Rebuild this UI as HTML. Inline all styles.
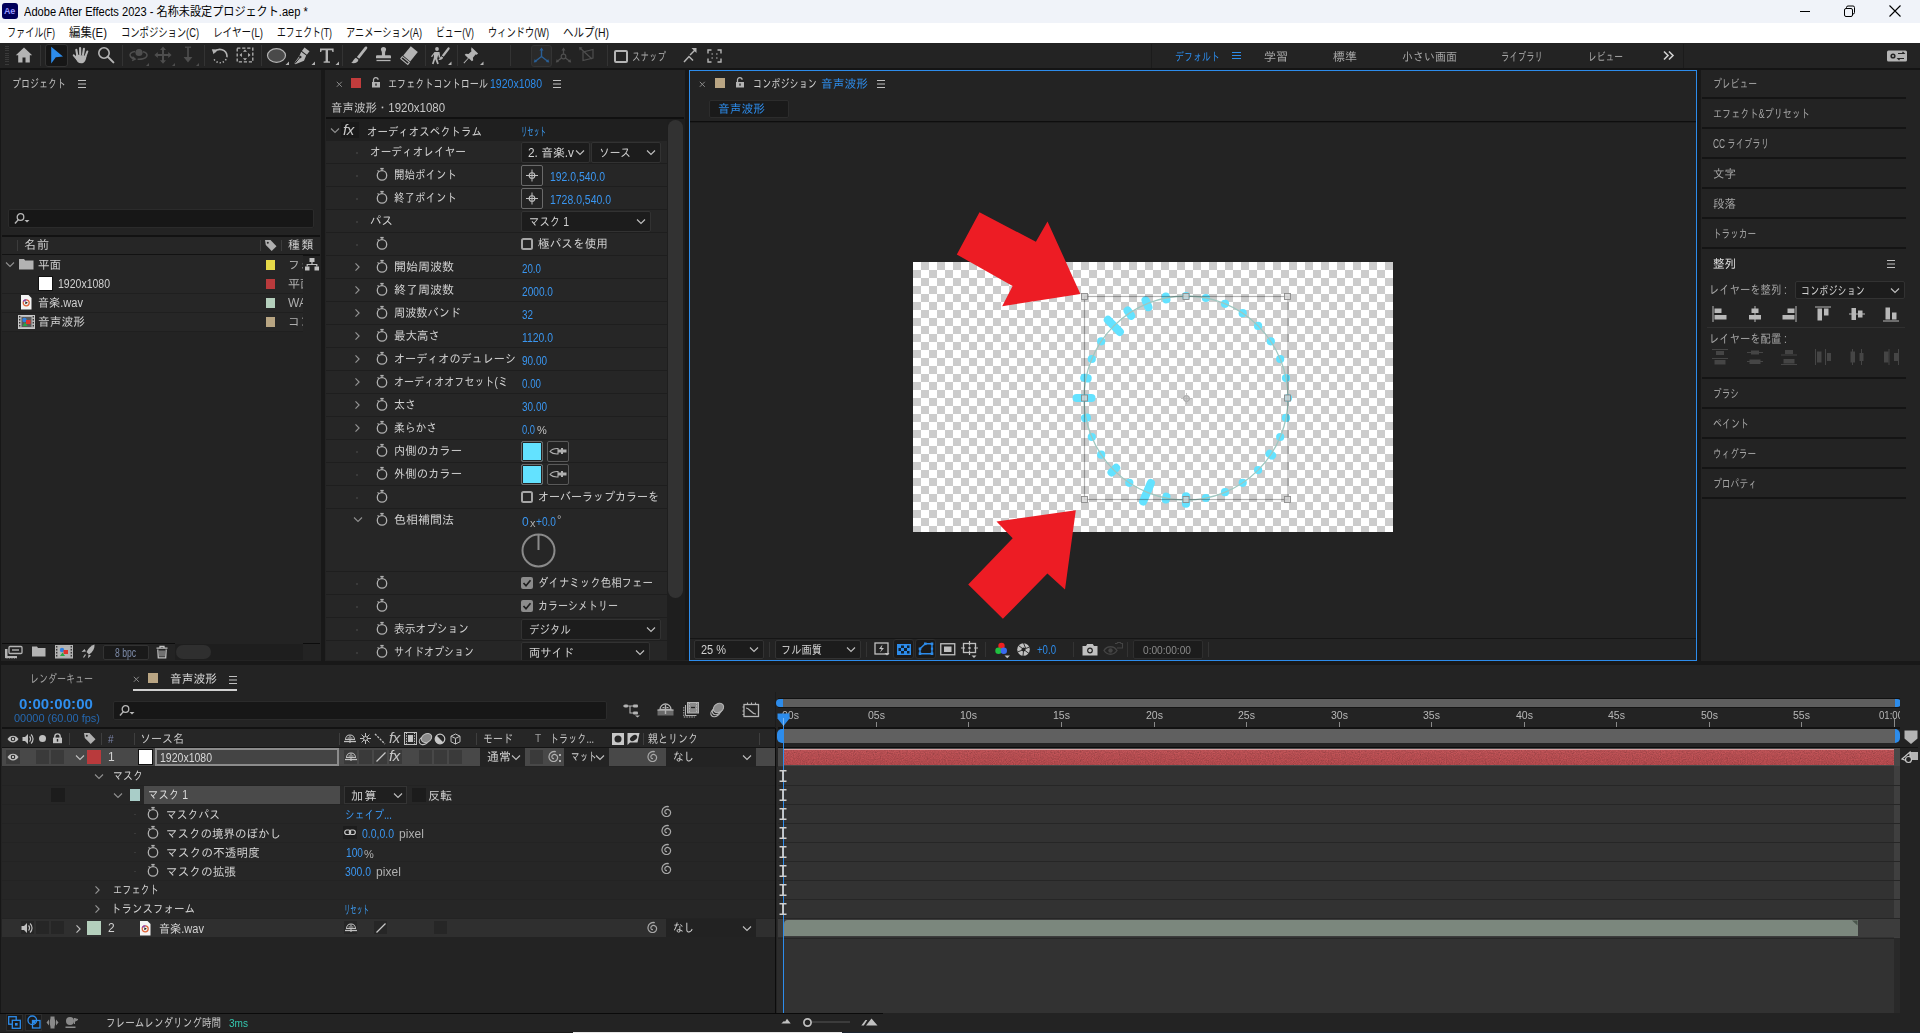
<!DOCTYPE html>
<html lang="ja"><head><meta charset="utf-8"><title>Adobe After Effects 2023</title>
<style>
html,body{margin:0;padding:0;background:#232323;}
body{width:1920px;height:1033px;position:relative;overflow:hidden;font-family:"Liberation Sans","IPAGothic",sans-serif;}
body div,body span,body svg{position:absolute;}
span{white-space:nowrap;}
.j{font-family:"Liberation Sans","IPAGothic",sans-serif;}
.w{font-family:"Liberation Sans","Noto Sans CJK JP",sans-serif;}
.i{font-family:"Liberation Sans",sans-serif;font-style:italic;}
svg{overflow:visible;}
</style></head>
<body>
<div style="left:0px;top:0px;width:1920px;height:23px;background:#f0f3f9;"></div>
<div style="left:2px;top:3px;width:16px;height:16px;background:#00005b;border-radius:3px;"></div>
<span class="w" style="left:4px;top:5.0px;line-height:12px;font-size:9px;color:#9999ff;letter-spacing:-0.3px;font-weight:bold;">Ae</span>
<span class="w" style="left:24px;top:3.5px;line-height:16px;font-size:12px;color:#000;transform:scaleX(0.926);transform-origin:0 50%;">Adobe After Effects 2023 - 名称未設定プロジェクト.aep *</span>
<svg style="left:1797px;top:3px;" width="16" height="16" viewBox="0 0 16 16"><path d="M3 8.5h10" stroke="#000" stroke-width="1" fill="none"/></svg>
<svg style="left:1841px;top:3px;" width="16" height="16" viewBox="0 0 16 16"><rect x="3.5" y="5.5" width="8" height="8" rx="1.5" fill="none" stroke="#000"/><path d="M5.5 5.5v-1a1.5 1.5 0 0 1 1.5-1.5h5a1.5 1.5 0 0 1 1.5 1.5v5a1.5 1.5 0 0 1-1.5 1.5h-0.5" fill="none" stroke="#000"/></svg>
<svg style="left:1887px;top:3px;" width="16" height="16" viewBox="0 0 16 16"><path d="M2.5 2.5l11 11M13.5 2.5l-11 11" stroke="#000" stroke-width="1.1" fill="none"/></svg>
<div style="left:0px;top:23px;width:1920px;height:20px;background:#ffffff;"></div>
<span class="w" style="left:7px;top:24.5px;line-height:16px;font-size:12px;color:#111;transform:scaleX(0.758);transform-origin:0 50%;">ファイル(F)</span>
<span class="w" style="left:69px;top:24.5px;line-height:16px;font-size:12px;color:#111;transform:scaleX(0.950);transform-origin:0 50%;">編集(E)</span>
<span class="w" style="left:121px;top:24.5px;line-height:16px;font-size:12px;color:#111;transform:scaleX(0.775);transform-origin:0 50%;">コンポジション(C)</span>
<span class="w" style="left:213px;top:24.5px;line-height:16px;font-size:12px;color:#111;transform:scaleX(0.802);transform-origin:0 50%;">レイヤー(L)</span>
<span class="w" style="left:277px;top:24.5px;line-height:16px;font-size:12px;color:#111;transform:scaleX(0.730);transform-origin:0 50%;">エフェクト(T)</span>
<span class="w" style="left:346px;top:24.5px;line-height:16px;font-size:12px;color:#111;transform:scaleX(0.764);transform-origin:0 50%;">アニメーション(A)</span>
<span class="w" style="left:436px;top:24.5px;line-height:16px;font-size:12px;color:#111;transform:scaleX(0.731);transform-origin:0 50%;">ビュー(V)</span>
<span class="w" style="left:488px;top:24.5px;line-height:16px;font-size:12px;color:#111;transform:scaleX(0.769);transform-origin:0 50%;">ウィンドウ(W)</span>
<span class="w" style="left:563px;top:24.5px;line-height:16px;font-size:12px;color:#111;transform:scaleX(0.873);transform-origin:0 50%;">ヘルプ(H)</span>
<div id="ui" style="left:0;top:0;width:1920px;height:1033px;will-change:transform;">
<div style="left:0px;top:43px;width:1920px;height:25px;background:#232323;"></div>
<div style="left:0px;top:68px;width:1920px;height:2px;background:#141414;"></div>
<div style="left:5px;top:46.0px;width:4px;height:1px;background:#3a3a3a;"></div>
<div style="left:5px;top:48.2px;width:4px;height:1px;background:#3a3a3a;"></div>
<div style="left:5px;top:50.4px;width:4px;height:1px;background:#3a3a3a;"></div>
<div style="left:5px;top:52.6px;width:4px;height:1px;background:#3a3a3a;"></div>
<div style="left:5px;top:54.8px;width:4px;height:1px;background:#3a3a3a;"></div>
<div style="left:5px;top:57.0px;width:4px;height:1px;background:#3a3a3a;"></div>
<div style="left:5px;top:59.2px;width:4px;height:1px;background:#3a3a3a;"></div>
<div style="left:5px;top:61.400000000000006px;width:4px;height:1px;background:#3a3a3a;"></div>
<div style="left:5px;top:63.6px;width:4px;height:1px;background:#3a3a3a;"></div>
<svg style="left:15px;top:47px;" width="18" height="16" viewBox="0 0 18 16"><path d="M9 0.5L0.8 8.2h2.4v7.3h4.3v-5h3v5h4.3V8.2h2.4z" fill="#b4b4b4"/></svg>
<div style="left:40px;top:45px;width:1px;height:21px;background:#333;"></div>
<div style="left:122px;top:45px;width:1px;height:21px;background:#333;"></div>
<div style="left:204px;top:45px;width:1px;height:21px;background:#333;"></div>
<div style="left:261px;top:45px;width:1px;height:21px;background:#333;"></div>
<div style="left:342px;top:45px;width:1px;height:21px;background:#333;"></div>
<div style="left:425px;top:45px;width:1px;height:21px;background:#333;"></div>
<div style="left:457px;top:45px;width:1px;height:21px;background:#333;"></div>
<div style="left:510px;top:45px;width:1px;height:21px;background:#333;"></div>
<div style="left:607px;top:45px;width:1px;height:21px;background:#333;"></div>
<div style="left:45px;top:44px;width:23px;height:23px;background:#161616;border:1px solid #333;border-radius:3px;box-sizing:border-box;"></div>
<svg style="left:50px;top:46px;" width="14" height="19" viewBox="0 0 14 19"><path d="M1.2 0.8L13 10.6 5.8 11.2 1.2 17.6z" fill="#2d8ceb"/></svg>
<svg style="left:72px;top:46px;" width="18" height="18" viewBox="0 0 18 18"><g stroke="#b4b4b4" stroke-width="2.100" stroke-linecap="round"><path d="M5.300 9.500L4.300 3.800M8.200 8.500L8.100 2M11 9L11.900 2.800M13.400 10.500L15.300 5.500M5 13L1.800 9.400"/></g><path d="M4.200 8.500l10.200 1.500c0 3.500-1.700 7.300-5.200 7.300-3 0-4.600-2-5.600-5z" fill="#b4b4b4"/></svg>
<svg style="left:97px;top:46px;" width="18" height="18" viewBox="0 0 18 18"><circle cx="7" cy="7" r="5.2" fill="none" stroke="#b4b4b4" stroke-width="1.6"/><path d="M10.8 10.8l5.6 5.6" stroke="#b4b4b4" stroke-width="2" stroke-linecap="round"/></svg>
<svg style="left:128px;top:46px;" width="22" height="20" viewBox="0 0 22 20"><circle cx="11" cy="6.5" r="3.6" fill="#4e4e4e"/><path d="M7 5.5C3 6 1 8 2.5 10.5c1 1.6 3.5 2.5 4.5 2.6M4.5 10.8l2.6 2.3-3 1.6M15 5.8c3 .6 5 2.5 3.6 4.8-1.2 2-5.5 3-9 2.6" fill="none" stroke="#4e4e4e" stroke-width="1.5"/><path d="M21 17v3h-3z" fill="#4e4e4e"/></svg>
<svg style="left:154px;top:46px;" width="22" height="20" viewBox="0 0 22 20"><path d="M9 0.5l3 3.4h-2v4.2h4.2v-2l3.4 3-3.4 3v-2H10v4.2h2l-3 3.4-3-3.4h2v-4.2H3.8v2l-3.4-3 3.4-3v2H8V3.900H6z" fill="#4e4e4e"/><path d="M21 17v3h-3z" fill="#4e4e4e"/></svg>
<svg style="left:180px;top:46px;" width="20" height="20" viewBox="0 0 20 20"><path d="M8 1.5v11" stroke="#4e4e4e" stroke-width="1.6"/><path d="M5 1.2h6" stroke="#4e4e4e" stroke-width="1.2"/><path d="M3.600 11h8.800L8 16.500z" fill="#4e4e4e"/><path d="M19 17v3h-3z" fill="#4e4e4e"/></svg>
<svg style="left:210px;top:46px;" width="20" height="20" viewBox="0 0 20 20"><path d="M4.500 6.200A7 7 0 0 1 17 10" fill="none" stroke="#b4b4b4" stroke-width="1.6"/><path d="M1.800 3.200l5.400.4-3.600 4.600z" fill="#b4b4b4"/><path d="M17 10a7 7 0 0 1-13.600 2" fill="none" stroke="#b4b4b4" stroke-width="1.500" stroke-dasharray="1.300 1.900"/></svg>
<svg style="left:236px;top:46px;" width="18" height="18" viewBox="0 0 18 18"><rect x="1.2" y="2.200" width="15.600" height="13.600" fill="none" stroke="#b4b4b4" stroke-width="1.3" stroke-dasharray="3.200 1.800"/><path d="M9 3.500l2 2.200H7zM9 14.500l2-2.200H7zM3.500 9l2.400-2v4zM14.500 9l-2.400-2v4z" fill="#b4b4b4"/></svg>
<svg style="left:266px;top:47px;" width="24" height="18" viewBox="0 0 24 18"><ellipse cx="10.500" cy="8.500" rx="9" ry="6.800" fill="#4a4a4a" stroke="#b4b4b4" stroke-width="1.200"/><path d="M23 14.500v3.500h-3.500z" fill="#b4b4b4"/></svg>
<svg style="left:292px;top:46px;" width="24" height="19" viewBox="0 0 24 19"><path d="M12.500 1.500l5 3.800-2.600 3.400-5-3.800z" fill="#b4b4b4"/><path d="M9.200 5.800l5 3.800-2.200 5.200-8.600 3.400-1.100-.900 5.200-7.500z" fill="#b4b4b4"/><path d="M2.800 17.600l5-6" stroke="#232323" stroke-width="1"/><circle cx="8.300" cy="11" r="1.200" fill="#232323"/><path d="M23 15.500v3.500h-3.500z" fill="#b4b4b4"/></svg>
<svg style="left:318px;top:46px;" width="22" height="19" viewBox="0 0 22 19"><path d="M2 2.500h13.600v3.600h-1.200l-.5-1.900H10v11l2 .4v1.200H5.600v-1.200l2-.4v-11H3.700l-.5 1.900H2z" fill="#b4b4b4"/><path d="M21 15.500v3.500h-3.500z" fill="#b4b4b4"/></svg>
<svg style="left:350px;top:46px;" width="18" height="19" viewBox="0 0 18 19"><path d="M16.800 0.800c.8.600.5 1.500 0 2.300L9.200 12.800 6.900 11 14.600 1.300c.6-.8 1.500-1 2.200-.5z" fill="#b4b4b4"/><path d="M6 11.800l2.400 1.900c-.3 2.400-2.800 4-7.200 3.300 1.700-.7 2.200-3.800 4.800-5.200z" fill="#b4b4b4"/></svg>
<svg style="left:375px;top:46px;" width="17" height="19" viewBox="0 0 17 19"><path d="M8.500 1a2.600 2.600 0 0 1 2.600 2.600c0 1.300-1 1.700-1 3.400v2.200h4.600c.8 0 1.300.5 1.300 1.300v1.700H1v-1.700c0-.8.500-1.300 1.300-1.300H6.900V7c0-1.700-1-2.100-1-3.400A2.600 2.600 0 0 1 8.500 1z" fill="#b4b4b4"/><path d="M1.500 14.500h14" stroke="#b4b4b4" stroke-width="1.300"/></svg>
<svg style="left:400px;top:45px;" width="19" height="21" viewBox="0 0 19 21"><path d="M10.800 1.200l7 5.800-7.600 9.400-7-5.800z" fill="#b4b4b4"/><path d="M2.400 11.600l7 5.800-1.600 2-7-5.800z" fill="none" stroke="#b4b4b4" stroke-width="1.100"/></svg>
<svg style="left:430px;top:46px;" width="22" height="20" viewBox="0 0 22 20"><circle cx="7" cy="3" r="1.900" fill="#b4b4b4"/><path d="M4.500 6h5l.8 5.400-1.400.3-.7-3-1 4 1.600 5-1.600.5-2-5-1.600 5-1.600-.5 1.900-6.200V8.300L2.200 11 .9 10.500z" fill="#b4b4b4"/><path d="M19.200 1.500c.8.500.5 1.300.1 1.900l-5.600 7.400-1.900-1.400 5.700-7.500c.5-.6 1.100-.8 1.700-.4z" fill="#b4b4b4"/><path d="M11.300 10.200l1.800 1.400c-.3 1.800-2 2.700-4.800 2.300 1.200-.6 1.300-2.700 3-3.700z" fill="#b4b4b4"/><path d="M21.500 15.500v3.500H18z" fill="#b4b4b4"/></svg>
<svg style="left:462px;top:46px;" width="22" height="20" viewBox="0 0 22 20"><path d="M9.500 1.300l6.600 6.300-1.400 1.100-1.200-.3-2.600 3.300.3 2.600-1.300 1-3.100-3-4.600 5.100-.7-.6L6 12 2.700 8.800l1.200-1.100 2.600.3 3-2.800-.4-1.300z" fill="#b4b4b4"/><path d="M21.500 15.500v3.500H18z" fill="#b4b4b4"/></svg>
<div style="left:531px;top:45px;width:21px;height:22px;background:#2a2a2a;border:1px solid #343434;border-radius:3px;box-sizing:border-box;"></div>
<svg style="left:533px;top:47px;" width="17" height="18" viewBox="0 0 17 18"><path d="M8.500 9.500V2M8.500 9.500L2 14.500M8.500 9.500L15 14.500" stroke="#2a5f96" stroke-width="1.400" fill="none"/><path d="M8.500 0.500l2 3h-4zM0.800 15.500l1-3.400 2.200 3zM16.200 15.500l-1-3.400-2.200 3z" fill="#2a5f96"/></svg>
<svg style="left:555px;top:47px;" width="17" height="18" viewBox="0 0 17 18"><path d="M8.500 7V2M6.500 11L2 14.500M10.500 11L15 14.500" stroke="#4e4e4e" stroke-width="1.300" fill="none"/><circle cx="8.500" cy="9.500" r="2.300" fill="none" stroke="#4e4e4e" stroke-width="1.200"/><path d="M8.500 0.500l2 3h-4zM0.800 15.500l1-3.400 2.200 3zM16.200 15.500l-1-3.400-2.200 3z" fill="#4e4e4e"/></svg>
<svg style="left:578px;top:46px;" width="18" height="18" viewBox="0 0 18 18"><path d="M5 6l10-2.500v8.500L5 14.500z" fill="none" stroke="#4e4e4e" stroke-width="1.200"/><path d="M2 2l12 11" stroke="#4e4e4e" stroke-width="1.200"/><path d="M1 1l3.500.6-2.800 2.800z" fill="#4e4e4e"/></svg>
<div style="left:614px;top:50px;width:14px;height:13px;border:2px solid #b4b4b4;border-radius:2px;box-sizing:border-box;"></div>
<span class="j" style="left:632px;top:48.5px;line-height:16px;font-size:12px;color:#a8a8a8;transform:scaleX(0.708);transform-origin:0 50%;">スナップ</span>
<svg style="left:682px;top:47px;" width="16" height="17" viewBox="0 0 16 17"><path d="M2 15l5-5.500 4 4" fill="none" stroke="#b4b4b4" stroke-width="1.500"/><path d="M8 8l5-5" stroke="#b4b4b4" stroke-width="1.500"/><path d="M14.500 1v5l-5-5z" fill="#b4b4b4"/></svg>
<svg style="left:707px;top:49px;" width="15" height="14" viewBox="0 0 15 14"><path d="M1 4.500V1h3.500M10.500 1H14v3.500M14 9.500V13h-3.500M4.500 13H1V9.500" fill="none" stroke="#b4b4b4" stroke-width="1.400"/><path d="M5 5.500V5h1M9 5h1v.5M10 8.500V9H9M6 9H5v-.5" fill="none" stroke="#b4b4b4" stroke-width="1.200"/></svg>
<div style="left:1151px;top:44px;width:1px;height:24px;background:#1b1b1b;"></div>
<div style="left:1683px;top:44px;width:1px;height:24px;background:#1b1b1b;"></div>
<span class="j" style="left:1175px;top:48.5px;line-height:16px;font-size:12px;color:#2d8ceb;transform:scaleX(0.750);transform-origin:0 50%;">デフォルト</span>
<svg style="left:1232px;top:51px;" width="10" height="10" viewBox="0 0 10 10"><path d="M0 1.500h9M0 4.500h9M0 7.500h9" stroke="#2d8ceb" stroke-width="1.200"/></svg>
<span class="j" style="left:1264px;top:48.5px;line-height:16px;font-size:12px;color:#a6a6a6;letter-spacing:0.00px;">学習</span>
<span class="j" style="left:1333px;top:48.5px;line-height:16px;font-size:12px;color:#a6a6a6;letter-spacing:0.00px;">標準</span>
<span class="j" style="left:1402px;top:48.5px;line-height:16px;font-size:12px;color:#a6a6a6;transform:scaleX(0.917);transform-origin:0 50%;">小さい画面</span>
<span class="j" style="left:1501px;top:48.5px;line-height:16px;font-size:12px;color:#a6a6a6;transform:scaleX(0.700);transform-origin:0 50%;">ライブラリ</span>
<span class="j" style="left:1588px;top:48.5px;line-height:16px;font-size:12px;color:#a6a6a6;transform:scaleX(0.729);transform-origin:0 50%;">レビュー</span>
<svg style="left:1663px;top:50px;" width="12" height="11" viewBox="0 0 12 11"><path d="M1 1.500l4 4-4 4M6 1.500l4 4-4 4" fill="none" stroke="#d0d0d0" stroke-width="1.600"/></svg>
<svg style="left:1887px;top:50px;" width="21" height="12" viewBox="0 0 21 12"><rect x="0" y="0.500" width="20" height="11" rx="1.500" fill="#b4b4b4"/><circle cx="6" cy="6" r="2.600" fill="#232323"/><circle cx="6" cy="6" r="1" fill="#b4b4b4"/><path d="M11 3.500h6l-1.500-1.500M17 8.500h-6l1.500 1.500" stroke="#232323" stroke-width="1.200" fill="none"/></svg>
<div style="left:0px;top:70px;width:321px;height:591px;background:#232323;"></div>
<span class="j" style="left:12px;top:76.0px;line-height:16px;font-size:12px;color:#c0c0c0;transform:scaleX(0.750);transform-origin:0 50%;">プロジェクト</span>
<svg style="left:78px;top:80px;" width="10" height="9" viewBox="0 0 10 9"><path d="M0 0.500h8M0 4h8M0 7.500h8" stroke="#c0c0c0" stroke-width="1.100"/></svg>
<div style="left:8px;top:209px;width:306px;height:19px;background:#171717;border:1px solid #2b2b2b;border-radius:2px;box-sizing:border-box;"></div>
<svg style="left:14px;top:212px;" width="16" height="13" viewBox="0 0 16 13"><circle cx="6.500" cy="5" r="3.300" fill="none" stroke="#b8b8b8" stroke-width="1.300"/><path d="M4.300 7.600L1 11.500" stroke="#b8b8b8" stroke-width="1.400"/><path d="M10.500 8h5l-2.500 2.600z" fill="#b8b8b8"/></svg>
<div style="left:2px;top:235px;width:318px;height:2px;background:#121212;"></div>
<div style="left:2px;top:237px;width:318px;height:17px;background:#262626;"></div>
<div style="left:2px;top:254px;width:318px;height:2px;background:#121212;"></div>
<div style="left:17px;top:240px;width:1px;height:11px;background:#3c3c3c;"></div>
<div style="left:260px;top:240px;width:1px;height:11px;background:#3c3c3c;"></div>
<div style="left:281px;top:240px;width:1px;height:11px;background:#3c3c3c;"></div>
<span class="j" style="left:24px;top:237.0px;line-height:16px;font-size:12px;color:#d0d0d0;letter-spacing:1.00px;">名前</span>
<svg style="left:264px;top:239px;" width="14" height="13" viewBox="0 0 14 13"><path d="M1 1h5.500l6 6.200-4.800 4.800L1.800 6z" fill="#b0b0b0"/><circle cx="3.800" cy="3.800" r="1" fill="#262626"/></svg>
<span class="j" style="left:288px;top:237.0px;line-height:16px;font-size:12px;color:#d0d0d0;letter-spacing:1.50px;">種類</span>
<div style="left:2px;top:255.0px;width:301px;height:19px;background:#262626;"></div>
<div style="left:2px;top:273.5px;width:301px;height:1px;background:#1f1f1f;"></div>
<div style="left:266px;top:259.5px;width:9px;height:10px;background:#e5d848;"></div>
<div style="left:2px;top:274.0px;width:301px;height:19px;background:#262626;"></div>
<div style="left:2px;top:292.5px;width:301px;height:1px;background:#1f1f1f;"></div>
<div style="left:266px;top:278.5px;width:9px;height:10px;background:#b93a3c;"></div>
<div style="left:2px;top:293.5px;width:301px;height:19px;background:#262626;"></div>
<div style="left:2px;top:312px;width:301px;height:1px;background:#1f1f1f;"></div>
<div style="left:266px;top:298px;width:9px;height:10px;background:#b4cfbc;"></div>
<div style="left:2px;top:312.5px;width:301px;height:19px;background:#262626;"></div>
<div style="left:2px;top:331px;width:301px;height:1px;background:#1f1f1f;"></div>
<div style="left:266px;top:317px;width:9px;height:10px;background:#b8a582;"></div>
<div style="left:288px;top:256px;width:15px;height:76px;overflow:hidden;">
<span class="j" style="left:0px;top:0.5px;line-height:16px;font-size:12px;color:#b0b0b0;">フォ</span>
<span class="j" style="left:0px;top:19.5px;line-height:16px;font-size:12px;color:#b0b0b0;">平面</span>
<span class="j" style="left:0px;top:39.0px;line-height:16px;font-size:12px;color:#b0b0b0;">WA</span>
<span class="j" style="left:0px;top:58.0px;line-height:16px;font-size:12px;color:#b0b0b0;">コン</span>
</div>
<svg style="left:4.5px;top:260.5px;" width="10" height="7" viewBox="0 0 10 7"><path d="M1 1.500l4 4 4-4" fill="none" stroke="#909090" stroke-width="1.100"/></svg>
<svg style="left:19px;top:258px;" width="15" height="12" viewBox="0 0 15 12"><path d="M0 1h5l1.200 1.500H14.500V11.500H0z" fill="#b2b2b2"/></svg>
<span class="j" style="left:38px;top:256.5px;line-height:16px;font-size:12px;color:#d0d0d0;transform:scaleX(0.958);transform-origin:0 50%;">平面</span>
<svg style="left:305px;top:258px;" width="14" height="13" viewBox="0 0 14 13"><path d="M4.500 0h5v4h-5zM0 8.500h4.500v4H0zM9.500 8.500H14v4H9.500z" fill="#c0c0c0"/><path d="M7 4v2.500M2.200 8.500v-2h9.600v2" fill="none" stroke="#c0c0c0" stroke-width="1.200"/></svg>
<div style="left:38px;top:276px;width:15px;height:15px;background:#ffffff;border:1px solid #111;box-sizing:border-box;"></div>
<span class="j" style="left:58px;top:276.0px;line-height:16px;font-size:12px;color:#d0d0d0;transform:scaleX(0.876);transform-origin:0 50%;">1920x1080</span>
<svg style="left:21px;top:295px;" width="11" height="15" viewBox="0 0 11 15"><path d="M0 0h7.500L10.500 3V14.500H0z" fill="#f4f4f4"/><circle cx="5.200" cy="7.800" r="3" fill="none" stroke="#e0663c" stroke-width="1.300"/><path d="M2.400 6.500a3 3 0 0 1 3-1.700" fill="none" stroke="#7a3fc8" stroke-width="1.300"/><path d="M4.300 6.300l2.600 1.500-2.600 1.500z" fill="#222"/></svg>
<span class="j" style="left:38px;top:295.0px;line-height:16px;font-size:12px;color:#d0d0d0;transform:scaleX(0.924);transform-origin:0 50%;">音楽.wav</span>
<svg style="left:18px;top:315px;" width="17" height="14" viewBox="0 0 17 14"><rect x="0.500" y="0.500" width="16" height="13" fill="#b4b4b4" stroke="#c8c8c8"/><path d="M1.700 1v12M15.300 1v12" stroke="#2a2a2a" stroke-width="1.200" stroke-dasharray="1.500 1.500"/><rect x="3.500" y="2" width="10" height="10" fill="#5a5a5a"/><circle cx="6.500" cy="5" r="2.200" fill="#2f7fe0"/><rect x="8" y="5" width="4.500" height="4" fill="#e0342c"/><path d="M4.500 11l2.500-3.500 2.500 3.500z" fill="#28a844"/></svg>
<span class="j" style="left:38px;top:314.0px;line-height:16px;font-size:12px;color:#d0d0d0;transform:scaleX(0.979);transform-origin:0 50%;">音声波形</span>
<div style="left:2px;top:643px;width:173px;height:1px;background:#0c0c0c;"></div>
<div style="left:303px;top:643px;width:17px;height:1px;background:#0c0c0c;"></div>
<div style="left:175px;top:644px;width:128px;height:16px;background:#1e1e1e;"></div>
<svg style="left:4px;top:646px;" width="19" height="13" viewBox="0 0 19 13"><rect x="5" y="0.500" width="13" height="7" rx="1" fill="none" stroke="#b4b4b4" stroke-width="1.300"/><path d="M8 4h7" stroke="#b4b4b4" stroke-width="1.400"/><path d="M1 3v9.500h12v-2.500H3.500V3z" fill="#b4b4b4"/><path d="M1 12.500h12" stroke="#232323" stroke-width="0.800" stroke-dasharray="1.500 1"/></svg>
<svg style="left:32px;top:646px;" width="14" height="11" viewBox="0 0 14 11"><path d="M0 0.500h5l1 1.500H13.500V10.500H0z" fill="#b4b4b4"/></svg>
<svg style="left:55px;top:645px;" width="18" height="14" viewBox="0 0 18 14"><rect x="0.500" y="0.500" width="17" height="12.500" fill="#a8a8a8" stroke="#b4b4b4"/><rect x="3" y="1.500" width="12" height="10.500" fill="#b4b4b4"/><path d="M1.700 1v12M16.300 1v12" stroke="#2a2a2a" stroke-width="1.200" stroke-dasharray="1.500 1.500"/><circle cx="7" cy="5" r="2.200" fill="#2f7fe0"/><rect x="8.500" y="5" width="4.500" height="4" fill="#e0342c"/><path d="M5 11l2.500-3.500L10 11z" fill="#28a844"/></svg>
<svg style="left:80px;top:644px;" width="16" height="15" viewBox="0 0 16 15"><path d="M14.500 0.500c.3 4-1.500 7.500-5.500 10L6.500 8c2-4 4.500-6.500 8-7.500z" fill="#b4b4b4"/><path d="M6 7.500L1.500 8l3-3zM8.500 10.500l-.5 3.800 3-2.800z" fill="#b4b4b4"/><path d="M5.500 10.500l-2 3" stroke="#b4b4b4" stroke-width="1.200"/></svg>
<div style="left:103px;top:645px;width:46px;height:15px;background:#1a1a1a;border:1px solid #333;border-radius:2px;box-sizing:border-box;"></div>
<span class="j" style="left:115px;top:645.5px;line-height:14px;font-size:12px;color:#7d8ba8;transform:scaleX(0.715);transform-origin:0 50%;">8 bpc</span>
<svg style="left:156px;top:645px;" width="12" height="14" viewBox="0 0 12 14"><path d="M0.500 3.200h11M4 3V1.300h4V3" fill="none" stroke="#c0c0c0" stroke-width="1.300"/><path d="M1.800 4.500l.500 8.300h7.400l.500-8.300" fill="none" stroke="#c0c0c0" stroke-width="1.300"/><path d="M4 5.500v6M6 5.500v6M8 5.500v6" stroke="#c0c0c0" stroke-width="1"/></svg>
<div style="left:176px;top:645px;width:35px;height:14px;background:#2f2f2f;border-radius:7px;"></div>
<div style="left:321px;top:70px;width:4px;height:591px;background:#181818;"></div>
<div style="left:325px;top:70px;width:364px;height:591px;background:#232323;"></div>
<svg style="left:336px;top:81px;" width="7" height="7" viewBox="0 0 7 7"><path d="M0.800 0.800l5 5M5.800 0.800l-5 5" stroke="#8a8a8a" stroke-width="1"/></svg>
<div style="left:351px;top:78px;width:10px;height:10px;background:#c23c3c;"></div>
<svg style="left:371px;top:77px;" width="10" height="11" viewBox="0 0 10 11"><path d="M2.500 5V3a2.300 2.300 0 0 1 4.600-.2" fill="none" stroke="#b4b4b4" stroke-width="1.300"/><rect x="1" y="5" width="8" height="5.500" fill="#b4b4b4"/><rect x="4.300" y="6.500" width="1.400" height="2.200" fill="#232323"/></svg>
<span class="j" style="left:388px;top:76.0px;line-height:16px;font-size:12px;color:#d0d0d0;transform:scaleX(0.758);transform-origin:0 50%;">エフェクトコントロール</span>
<span class="j" style="left:490px;top:76.0px;line-height:16px;font-size:12px;color:#2d8ceb;transform:scaleX(0.876);transform-origin:0 50%;">1920x1080</span>
<svg style="left:553px;top:80px;" width="10" height="9" viewBox="0 0 10 9"><path d="M0 0.500h8M0 4h8M0 7.500h8" stroke="#c0c0c0" stroke-width="1.100"/></svg>
<span class="j" style="left:331px;top:100.0px;line-height:16px;font-size:12px;color:#c8c8c8;transform:scaleX(0.955);transform-origin:0 50%;">音声波形・1920x1080</span>
<div style="left:326px;top:117px;width:358px;height:2px;background:#101010;"></div>
<div style="left:667px;top:119px;width:18px;height:541px;background:#1e1e1e;"></div>
<div style="left:668px;top:120px;width:15px;height:478px;background:#323232;border-radius:7.5px;"></div>
<div style="left:685px;top:70px;width:4px;height:591px;background:#181818;"></div>
<div style="left:326px;top:119px;width:341px;height:22px;background:#1f1f1f;"></div>
<div style="left:326px;top:141px;width:341px;height:23px;background:#262626;"></div>
<div style="left:326px;top:163px;width:341px;height:1px;background:#1e1e1e;"></div>
<div style="left:326px;top:164px;width:341px;height:23px;background:#262626;"></div>
<div style="left:326px;top:186px;width:341px;height:1px;background:#1e1e1e;"></div>
<div style="left:326px;top:187px;width:341px;height:23px;background:#262626;"></div>
<div style="left:326px;top:209px;width:341px;height:1px;background:#1e1e1e;"></div>
<div style="left:326px;top:210px;width:341px;height:23px;background:#262626;"></div>
<div style="left:326px;top:232px;width:341px;height:1px;background:#1e1e1e;"></div>
<div style="left:326px;top:233px;width:341px;height:23px;background:#262626;"></div>
<div style="left:326px;top:255px;width:341px;height:1px;background:#1e1e1e;"></div>
<div style="left:326px;top:256px;width:341px;height:23px;background:#262626;"></div>
<div style="left:326px;top:278px;width:341px;height:1px;background:#1e1e1e;"></div>
<div style="left:326px;top:279px;width:341px;height:23px;background:#262626;"></div>
<div style="left:326px;top:301px;width:341px;height:1px;background:#1e1e1e;"></div>
<div style="left:326px;top:302px;width:341px;height:23px;background:#262626;"></div>
<div style="left:326px;top:324px;width:341px;height:1px;background:#1e1e1e;"></div>
<div style="left:326px;top:325px;width:341px;height:23px;background:#262626;"></div>
<div style="left:326px;top:347px;width:341px;height:1px;background:#1e1e1e;"></div>
<div style="left:326px;top:348px;width:341px;height:23px;background:#262626;"></div>
<div style="left:326px;top:370px;width:341px;height:1px;background:#1e1e1e;"></div>
<div style="left:326px;top:371px;width:341px;height:23px;background:#262626;"></div>
<div style="left:326px;top:393px;width:341px;height:1px;background:#1e1e1e;"></div>
<div style="left:326px;top:394px;width:341px;height:23px;background:#262626;"></div>
<div style="left:326px;top:416px;width:341px;height:1px;background:#1e1e1e;"></div>
<div style="left:326px;top:417px;width:341px;height:23px;background:#262626;"></div>
<div style="left:326px;top:439px;width:341px;height:1px;background:#1e1e1e;"></div>
<div style="left:326px;top:440px;width:341px;height:23px;background:#262626;"></div>
<div style="left:326px;top:462px;width:341px;height:1px;background:#1e1e1e;"></div>
<div style="left:326px;top:463px;width:341px;height:23px;background:#262626;"></div>
<div style="left:326px;top:485px;width:341px;height:1px;background:#1e1e1e;"></div>
<div style="left:326px;top:486px;width:341px;height:23px;background:#262626;"></div>
<div style="left:326px;top:508px;width:341px;height:1px;background:#1e1e1e;"></div>
<div style="left:326px;top:509px;width:341px;height:23px;background:#262626;"></div>
<div style="left:326px;top:532px;width:341px;height:40px;background:#262626;"></div>
<div style="left:326px;top:571px;width:341px;height:1px;background:#1e1e1e;"></div>
<div style="left:326px;top:572px;width:341px;height:23px;background:#262626;"></div>
<div style="left:326px;top:594px;width:341px;height:1px;background:#1e1e1e;"></div>
<div style="left:326px;top:595px;width:341px;height:23px;background:#262626;"></div>
<div style="left:326px;top:617px;width:341px;height:1px;background:#1e1e1e;"></div>
<div style="left:326px;top:618px;width:341px;height:23px;background:#262626;"></div>
<div style="left:326px;top:640px;width:341px;height:1px;background:#1e1e1e;"></div>
<div style="left:326px;top:641px;width:341px;height:23px;background:#262626;"></div>
<div style="left:326px;top:663px;width:341px;height:1px;background:#1e1e1e;"></div>
<div style="left:326px;top:660px;width:342px;height:1px;background:#232323;"></div>
<svg style="left:330px;top:126.5px;" width="10" height="7" viewBox="0 0 10 7"><path d="M1 1.500l4 4 4-4" fill="none" stroke="#909090" stroke-width="1.100"/></svg>
<div style="left:341px;top:122px;width:18px;height:16px;background:#191919;"></div>
<span class="i" style="left:343px;top:121.5px;line-height:16px;font-size:15px;color:#c8c8c8;letter-spacing:-0.3px;">fx</span>
<span class="j" style="left:367px;top:124.0px;line-height:16px;font-size:12px;color:#d2d2d2;transform:scaleX(0.871);transform-origin:0 50%;">オーディオスペクトラム</span>
<span class="j" style="left:521px;top:124.0px;line-height:16px;font-size:12px;color:#3d9ff8;transform:scaleX(0.521);transform-origin:0 50%;">リセット</span>
<div style="left:356px;top:151.5px;width:2px;height:2px;background:#3a3a3a;"></div>
<span class="j" style="left:370px;top:144.0px;line-height:16px;font-size:12px;color:#d2d2d2;transform:scaleX(0.889);transform-origin:0 50%;">オーディオレイヤー</span>
<div style="left:521px;top:142px;width:69px;height:21px;background:#1c1c1c;border:1px solid #323232;border-radius:2px;box-sizing:border-box;"></div>
<span class="j" style="left:528px;top:145.0px;line-height:16px;font-size:12px;color:#d2d2d2;transform:scaleX(0.985);transform-origin:0 50%;">2. 音楽.v</span>
<svg style="left:575px;top:149.0px;" width="10" height="7" viewBox="0 0 10 7"><path d="M1 1.500l4 4 4-4" fill="none" stroke="#c0c0c0" stroke-width="1.100"/></svg>
<div style="left:591px;top:142px;width:70px;height:21px;background:#1c1c1c;border:1px solid #323232;border-radius:2px;box-sizing:border-box;"></div>
<span class="j" style="left:599px;top:145.0px;line-height:16px;font-size:12px;color:#d2d2d2;transform:scaleX(0.889);transform-origin:0 50%;">ソース</span>
<svg style="left:646px;top:149.0px;" width="10" height="7" viewBox="0 0 10 7"><path d="M1 1.500l4 4 4-4" fill="none" stroke="#c0c0c0" stroke-width="1.100"/></svg>
<div style="left:356px;top:174.5px;width:2px;height:2px;background:#3a3a3a;"></div>
<svg style="left:374.5px;top:165.5px;" width="14" height="16" viewBox="0 0 14 16"><circle cx="7" cy="9.400" r="4.700" fill="none" stroke="#b0b0b0" stroke-width="1.300"/><path d="M5.300 2.600h3.400" stroke="#b0b0b0" stroke-width="1.400"/><path d="M7 2.600v2M2.600 4.300l1.300 1.300" stroke="#b0b0b0" stroke-width="1.200"/></svg>
<span class="j" style="left:394px;top:167.0px;line-height:16px;font-size:12px;color:#d2d2d2;transform:scaleX(0.875);transform-origin:0 50%;">開始ポイント</span>
<div style="left:521px;top:165px;width:22px;height:21px;background:#232323;border:1px solid #6a6a6a;border-radius:2px;box-sizing:border-box;"></div>
<svg style="left:525px;top:169px;" width="14" height="13" viewBox="0 0 14 13"><circle cx="7" cy="6.500" r="2.800" fill="none" stroke="#c0c0c0" stroke-width="1.100"/><path d="M7 0.500v12M1 6.500h12" stroke="#c0c0c0" stroke-width="1"/></svg>
<span class="j" style="left:550px;top:168.5px;line-height:16px;font-size:12px;color:#3a96f0;transform:scaleX(0.867);transform-origin:0 50%;">192.0,540.0</span>
<div style="left:356px;top:197.5px;width:2px;height:2px;background:#3a3a3a;"></div>
<svg style="left:374.5px;top:188.5px;" width="14" height="16" viewBox="0 0 14 16"><circle cx="7" cy="9.400" r="4.700" fill="none" stroke="#b0b0b0" stroke-width="1.300"/><path d="M5.300 2.600h3.400" stroke="#b0b0b0" stroke-width="1.400"/><path d="M7 2.600v2M2.600 4.300l1.300 1.300" stroke="#b0b0b0" stroke-width="1.200"/></svg>
<span class="j" style="left:394px;top:190.0px;line-height:16px;font-size:12px;color:#d2d2d2;transform:scaleX(0.875);transform-origin:0 50%;">終了ポイント</span>
<div style="left:521px;top:188px;width:22px;height:21px;background:#232323;border:1px solid #6a6a6a;border-radius:2px;box-sizing:border-box;"></div>
<svg style="left:525px;top:192px;" width="14" height="13" viewBox="0 0 14 13"><circle cx="7" cy="6.500" r="2.800" fill="none" stroke="#c0c0c0" stroke-width="1.100"/><path d="M7 0.500v12M1 6.500h12" stroke="#c0c0c0" stroke-width="1"/></svg>
<span class="j" style="left:550px;top:191.5px;line-height:16px;font-size:12px;color:#3a96f0;transform:scaleX(0.870);transform-origin:0 50%;">1728.0,540.0</span>
<div style="left:356px;top:220.5px;width:2px;height:2px;background:#3a3a3a;"></div>
<span class="j" style="left:370px;top:213.0px;line-height:16px;font-size:12px;color:#d2d2d2;transform:scaleX(0.958);transform-origin:0 50%;">パス</span>
<div style="left:521px;top:211px;width:130px;height:21px;background:#1c1c1c;border:1px solid #323232;border-radius:2px;box-sizing:border-box;"></div>
<span class="j" style="left:529px;top:214.0px;line-height:16px;font-size:12px;color:#d2d2d2;transform:scaleX(0.869);transform-origin:0 50%;">マスク 1</span>
<svg style="left:636px;top:218.0px;" width="10" height="7" viewBox="0 0 10 7"><path d="M1 1.500l4 4 4-4" fill="none" stroke="#c0c0c0" stroke-width="1.100"/></svg>
<div style="left:356px;top:243.5px;width:2px;height:2px;background:#3a3a3a;"></div>
<svg style="left:374.5px;top:234.5px;" width="14" height="16" viewBox="0 0 14 16"><circle cx="7" cy="9.400" r="4.700" fill="none" stroke="#b0b0b0" stroke-width="1.300"/><path d="M5.300 2.600h3.400" stroke="#b0b0b0" stroke-width="1.400"/><path d="M7 2.600v2M2.600 4.300l1.300 1.300" stroke="#b0b0b0" stroke-width="1.200"/></svg>
<div style="left:521px;top:238.0px;width:12px;height:12px;border:2px solid #a6a6a6;border-radius:2.500px;box-sizing:border-box;"></div>
<span class="j" style="left:538px;top:236.0px;line-height:16px;font-size:12px;color:#d2d2d2;transform:scaleX(0.972);transform-origin:0 50%;">極パスを使用</span>
<svg style="left:353.5px;top:261.5px;" width="7" height="10" viewBox="0 0 7 10"><path d="M1.500 1.400l3.600 3.600-3.600 3.600" fill="none" stroke="#969696" stroke-width="1.100"/></svg>
<svg style="left:374.5px;top:257.5px;" width="14" height="16" viewBox="0 0 14 16"><circle cx="7" cy="9.400" r="4.700" fill="none" stroke="#b0b0b0" stroke-width="1.300"/><path d="M5.300 2.600h3.400" stroke="#b0b0b0" stroke-width="1.400"/><path d="M7 2.600v2M2.600 4.300l1.300 1.300" stroke="#b0b0b0" stroke-width="1.200"/></svg>
<span class="j" style="left:394px;top:259.0px;line-height:16px;font-size:12px;color:#d2d2d2;letter-spacing:0.00px;">開始周波数</span>
<span class="j" style="left:522px;top:260.5px;line-height:16px;font-size:12px;color:#3a96f0;transform:scaleX(0.813);transform-origin:0 50%;">20.0</span>
<svg style="left:353.5px;top:284.5px;" width="7" height="10" viewBox="0 0 7 10"><path d="M1.500 1.400l3.600 3.600-3.600 3.600" fill="none" stroke="#969696" stroke-width="1.100"/></svg>
<svg style="left:374.5px;top:280.5px;" width="14" height="16" viewBox="0 0 14 16"><circle cx="7" cy="9.400" r="4.700" fill="none" stroke="#b0b0b0" stroke-width="1.300"/><path d="M5.300 2.600h3.400" stroke="#b0b0b0" stroke-width="1.400"/><path d="M7 2.600v2M2.600 4.300l1.300 1.300" stroke="#b0b0b0" stroke-width="1.200"/></svg>
<span class="j" style="left:394px;top:282.0px;line-height:16px;font-size:12px;color:#d2d2d2;letter-spacing:0.00px;">終了周波数</span>
<span class="j" style="left:522px;top:283.5px;line-height:16px;font-size:12px;color:#3a96f0;transform:scaleX(0.845);transform-origin:0 50%;">2000.0</span>
<svg style="left:353.5px;top:307.5px;" width="7" height="10" viewBox="0 0 7 10"><path d="M1.500 1.400l3.600 3.600-3.600 3.600" fill="none" stroke="#969696" stroke-width="1.100"/></svg>
<svg style="left:374.5px;top:303.5px;" width="14" height="16" viewBox="0 0 14 16"><circle cx="7" cy="9.400" r="4.700" fill="none" stroke="#b0b0b0" stroke-width="1.300"/><path d="M5.300 2.600h3.400" stroke="#b0b0b0" stroke-width="1.400"/><path d="M7 2.600v2M2.600 4.300l1.300 1.300" stroke="#b0b0b0" stroke-width="1.200"/></svg>
<span class="j" style="left:394px;top:305.0px;line-height:16px;font-size:12px;color:#d2d2d2;transform:scaleX(0.931);transform-origin:0 50%;">周波数バンド</span>
<span class="j" style="left:522px;top:306.5px;line-height:16px;font-size:12px;color:#3a96f0;transform:scaleX(0.823);transform-origin:0 50%;">32</span>
<svg style="left:353.5px;top:330.5px;" width="7" height="10" viewBox="0 0 7 10"><path d="M1.500 1.400l3.600 3.600-3.600 3.600" fill="none" stroke="#969696" stroke-width="1.100"/></svg>
<svg style="left:374.5px;top:326.5px;" width="14" height="16" viewBox="0 0 14 16"><circle cx="7" cy="9.400" r="4.700" fill="none" stroke="#b0b0b0" stroke-width="1.300"/><path d="M5.300 2.600h3.400" stroke="#b0b0b0" stroke-width="1.400"/><path d="M7 2.600v2M2.600 4.300l1.300 1.300" stroke="#b0b0b0" stroke-width="1.200"/></svg>
<span class="j" style="left:394px;top:328.0px;line-height:16px;font-size:12px;color:#d2d2d2;transform:scaleX(0.958);transform-origin:0 50%;">最大高さ</span>
<span class="j" style="left:522px;top:329.5px;line-height:16px;font-size:12px;color:#3a96f0;transform:scaleX(0.866);transform-origin:0 50%;">1120.0</span>
<svg style="left:353.5px;top:353.5px;" width="7" height="10" viewBox="0 0 7 10"><path d="M1.500 1.400l3.600 3.600-3.600 3.600" fill="none" stroke="#969696" stroke-width="1.100"/></svg>
<svg style="left:374.5px;top:349.5px;" width="14" height="16" viewBox="0 0 14 16"><circle cx="7" cy="9.400" r="4.700" fill="none" stroke="#b0b0b0" stroke-width="1.300"/><path d="M5.300 2.600h3.400" stroke="#b0b0b0" stroke-width="1.400"/><path d="M7 2.600v2M2.600 4.300l1.300 1.300" stroke="#b0b0b0" stroke-width="1.200"/></svg>
<span class="j" style="left:394px;top:351.0px;line-height:16px;font-size:12px;color:#d2d2d2;transform:scaleX(0.924);transform-origin:0 50%;">オーディオのデュレーシ</span>
<span class="j" style="left:522px;top:352.5px;line-height:16px;font-size:12px;color:#3a96f0;transform:scaleX(0.832);transform-origin:0 50%;">90.00</span>
<svg style="left:353.5px;top:376.5px;" width="7" height="10" viewBox="0 0 7 10"><path d="M1.500 1.400l3.600 3.600-3.600 3.600" fill="none" stroke="#969696" stroke-width="1.100"/></svg>
<svg style="left:374.5px;top:372.5px;" width="14" height="16" viewBox="0 0 14 16"><circle cx="7" cy="9.400" r="4.700" fill="none" stroke="#b0b0b0" stroke-width="1.300"/><path d="M5.300 2.600h3.400" stroke="#b0b0b0" stroke-width="1.400"/><path d="M7 2.600v2M2.600 4.300l1.300 1.300" stroke="#b0b0b0" stroke-width="1.200"/></svg>
<span class="j" style="left:394px;top:374.0px;line-height:16px;font-size:12px;color:#d2d2d2;transform:scaleX(0.838);transform-origin:0 50%;">オーディオオフセット(ミ</span>
<span class="j" style="left:522px;top:375.5px;line-height:16px;font-size:12px;color:#3a96f0;transform:scaleX(0.813);transform-origin:0 50%;">0.00</span>
<svg style="left:353.5px;top:399.5px;" width="7" height="10" viewBox="0 0 7 10"><path d="M1.500 1.400l3.600 3.600-3.600 3.600" fill="none" stroke="#969696" stroke-width="1.100"/></svg>
<svg style="left:374.5px;top:395.5px;" width="14" height="16" viewBox="0 0 14 16"><circle cx="7" cy="9.400" r="4.700" fill="none" stroke="#b0b0b0" stroke-width="1.300"/><path d="M5.300 2.600h3.400" stroke="#b0b0b0" stroke-width="1.400"/><path d="M7 2.600v2M2.600 4.300l1.300 1.300" stroke="#b0b0b0" stroke-width="1.200"/></svg>
<span class="j" style="left:394px;top:397.0px;line-height:16px;font-size:12px;color:#d2d2d2;transform:scaleX(0.917);transform-origin:0 50%;">太さ</span>
<span class="j" style="left:522px;top:398.5px;line-height:16px;font-size:12px;color:#3a96f0;transform:scaleX(0.832);transform-origin:0 50%;">30.00</span>
<svg style="left:353.5px;top:422.5px;" width="7" height="10" viewBox="0 0 7 10"><path d="M1.500 1.400l3.600 3.600-3.600 3.600" fill="none" stroke="#969696" stroke-width="1.100"/></svg>
<svg style="left:374.5px;top:418.5px;" width="14" height="16" viewBox="0 0 14 16"><circle cx="7" cy="9.400" r="4.700" fill="none" stroke="#b0b0b0" stroke-width="1.300"/><path d="M5.300 2.600h3.400" stroke="#b0b0b0" stroke-width="1.400"/><path d="M7 2.600v2M2.600 4.300l1.300 1.300" stroke="#b0b0b0" stroke-width="1.200"/></svg>
<span class="j" style="left:394px;top:420.0px;line-height:16px;font-size:12px;color:#d2d2d2;transform:scaleX(0.896);transform-origin:0 50%;">柔らかさ</span>
<span class="j" style="left:522px;top:421.5px;line-height:16px;font-size:12px;color:#3a96f0;transform:scaleX(0.779);transform-origin:0 50%;">0.0</span>
<span class="j" style="left:537px;top:423.0px;line-height:14px;font-size:11px;color:#c0c0c0;">%</span>
<div style="left:356px;top:450.5px;width:2px;height:2px;background:#3a3a3a;"></div>
<svg style="left:374.5px;top:441.5px;" width="14" height="16" viewBox="0 0 14 16"><circle cx="7" cy="9.400" r="4.700" fill="none" stroke="#b0b0b0" stroke-width="1.300"/><path d="M5.300 2.600h3.400" stroke="#b0b0b0" stroke-width="1.400"/><path d="M7 2.600v2M2.600 4.300l1.300 1.300" stroke="#b0b0b0" stroke-width="1.200"/></svg>
<span class="j" style="left:394px;top:443.0px;line-height:16px;font-size:12px;color:#d2d2d2;transform:scaleX(0.944);transform-origin:0 50%;">内側のカラー</span>
<div style="left:521px;top:441px;width:22px;height:21px;background:#63e2ff;border:1px solid #6a6a6a;outline:0;border-radius:2px;box-sizing:border-box;box-shadow:inset 0 0 0 1px #232323;"></div>
<div style="left:547px;top:441px;width:22px;height:21px;background:#232323;border:1px solid #5a5a5a;border-radius:2px;box-sizing:border-box;"></div>
<svg style="left:549px;top:446px;" width="18" height="10" viewBox="0 0 18 10"><path d="M1 5.500c2-2.500 5-3.200 8-3v5.500c-3 .2-6-.500-8-2.500z" fill="none" stroke="#b0b0b0" stroke-width="1.100"/><path d="M9 3.500h3v-1.500h2v1.500h3.500v3H14v1.500h-2V6.500H9z" fill="#b0b0b0"/></svg>
<div style="left:356px;top:473.5px;width:2px;height:2px;background:#3a3a3a;"></div>
<svg style="left:374.5px;top:464.5px;" width="14" height="16" viewBox="0 0 14 16"><circle cx="7" cy="9.400" r="4.700" fill="none" stroke="#b0b0b0" stroke-width="1.300"/><path d="M5.300 2.600h3.400" stroke="#b0b0b0" stroke-width="1.400"/><path d="M7 2.600v2M2.600 4.300l1.300 1.300" stroke="#b0b0b0" stroke-width="1.200"/></svg>
<span class="j" style="left:394px;top:466.0px;line-height:16px;font-size:12px;color:#d2d2d2;transform:scaleX(0.944);transform-origin:0 50%;">外側のカラー</span>
<div style="left:521px;top:464px;width:22px;height:21px;background:#63e2ff;border:1px solid #6a6a6a;outline:0;border-radius:2px;box-sizing:border-box;box-shadow:inset 0 0 0 1px #232323;"></div>
<div style="left:547px;top:464px;width:22px;height:21px;background:#232323;border:1px solid #5a5a5a;border-radius:2px;box-sizing:border-box;"></div>
<svg style="left:549px;top:469px;" width="18" height="10" viewBox="0 0 18 10"><path d="M1 5.500c2-2.500 5-3.200 8-3v5.500c-3 .2-6-.500-8-2.500z" fill="none" stroke="#b0b0b0" stroke-width="1.100"/><path d="M9 3.500h3v-1.500h2v1.500h3.500v3H14v1.500h-2V6.500H9z" fill="#b0b0b0"/></svg>
<div style="left:356px;top:496.5px;width:2px;height:2px;background:#3a3a3a;"></div>
<svg style="left:374.5px;top:487.5px;" width="14" height="16" viewBox="0 0 14 16"><circle cx="7" cy="9.400" r="4.700" fill="none" stroke="#b0b0b0" stroke-width="1.300"/><path d="M5.300 2.600h3.400" stroke="#b0b0b0" stroke-width="1.400"/><path d="M7 2.600v2M2.600 4.300l1.300 1.300" stroke="#b0b0b0" stroke-width="1.200"/></svg>
<div style="left:521px;top:491.0px;width:12px;height:12px;border:2px solid #a6a6a6;border-radius:2.500px;box-sizing:border-box;"></div>
<span class="j" style="left:538px;top:489.0px;line-height:16px;font-size:12px;color:#d2d2d2;transform:scaleX(0.917);transform-origin:0 50%;">オーバーラップカラーを</span>
<svg style="left:352.5px;top:515.5px;" width="10" height="7" viewBox="0 0 10 7"><path d="M1 1.500l4 4 4-4" fill="none" stroke="#909090" stroke-width="1.100"/></svg>
<svg style="left:374.5px;top:510.5px;" width="14" height="16" viewBox="0 0 14 16"><circle cx="7" cy="9.400" r="4.700" fill="none" stroke="#b0b0b0" stroke-width="1.300"/><path d="M5.300 2.600h3.400" stroke="#b0b0b0" stroke-width="1.400"/><path d="M7 2.600v2M2.600 4.300l1.300 1.300" stroke="#b0b0b0" stroke-width="1.200"/></svg>
<span class="j" style="left:394px;top:512.0px;line-height:16px;font-size:12px;color:#d2d2d2;letter-spacing:0.00px;">色相補間法</span>
<span class="j" style="left:522px;top:513.5px;line-height:16px;font-size:12px;color:#3a96f0;">0</span>
<span class="j" style="left:530px;top:516.0px;line-height:14px;font-size:11px;color:#b0b0b0;">x</span>
<span class="j" style="left:536px;top:513.5px;line-height:16px;font-size:12px;color:#3a96f0;transform:scaleX(0.844);transform-origin:0 50%;">+0.0</span>
<span class="j" style="left:557px;top:512.0px;line-height:14px;font-size:11px;color:#b0b0b0;">°</span>
<svg style="left:521px;top:533px;" width="36" height="36" viewBox="0 0 36 36"><circle cx="17.500" cy="17.500" r="16" fill="none" stroke="#8a8a8a" stroke-width="2"/><path d="M17.500 2v15" stroke="#8a8a8a" stroke-width="2"/></svg>
<div style="left:356px;top:582.5px;width:2px;height:2px;background:#3a3a3a;"></div>
<svg style="left:374.5px;top:573.5px;" width="14" height="16" viewBox="0 0 14 16"><circle cx="7" cy="9.400" r="4.700" fill="none" stroke="#b0b0b0" stroke-width="1.300"/><path d="M5.300 2.600h3.400" stroke="#b0b0b0" stroke-width="1.400"/><path d="M7 2.600v2M2.600 4.300l1.300 1.300" stroke="#b0b0b0" stroke-width="1.200"/></svg>
<div style="left:521px;top:577.0px;width:12px;height:12px;background:#8c8c8c;border-radius:2px;"></div>
<svg style="left:521px;top:577.0px;" width="12" height="12" viewBox="0 0 12 12"><path d="M2.500 6l2.500 2.800 4.500-5.500" fill="none" stroke="#1e1e1e" stroke-width="1.700"/></svg>
<span class="j" style="left:538px;top:575.0px;line-height:16px;font-size:12px;color:#d2d2d2;transform:scaleX(0.871);transform-origin:0 50%;">ダイナミック色相フェー</span>
<div style="left:356px;top:605.5px;width:2px;height:2px;background:#3a3a3a;"></div>
<svg style="left:374.5px;top:596.5px;" width="14" height="16" viewBox="0 0 14 16"><circle cx="7" cy="9.400" r="4.700" fill="none" stroke="#b0b0b0" stroke-width="1.300"/><path d="M5.300 2.600h3.400" stroke="#b0b0b0" stroke-width="1.400"/><path d="M7 2.600v2M2.600 4.300l1.300 1.300" stroke="#b0b0b0" stroke-width="1.200"/></svg>
<div style="left:521px;top:600.0px;width:12px;height:12px;background:#8c8c8c;border-radius:2px;"></div>
<svg style="left:521px;top:600.0px;" width="12" height="12" viewBox="0 0 12 12"><path d="M2.500 6l2.500 2.800 4.500-5.500" fill="none" stroke="#1e1e1e" stroke-width="1.700"/></svg>
<span class="j" style="left:538px;top:598.0px;line-height:16px;font-size:12px;color:#d2d2d2;transform:scaleX(0.833);transform-origin:0 50%;">カラーシメトリー</span>
<div style="left:356px;top:628.5px;width:2px;height:2px;background:#3a3a3a;"></div>
<svg style="left:374.5px;top:619.5px;" width="14" height="16" viewBox="0 0 14 16"><circle cx="7" cy="9.400" r="4.700" fill="none" stroke="#b0b0b0" stroke-width="1.300"/><path d="M5.300 2.600h3.400" stroke="#b0b0b0" stroke-width="1.400"/><path d="M7 2.600v2M2.600 4.300l1.300 1.300" stroke="#b0b0b0" stroke-width="1.200"/></svg>
<span class="j" style="left:394px;top:621.0px;line-height:16px;font-size:12px;color:#d2d2d2;transform:scaleX(0.893);transform-origin:0 50%;">表示オプション</span>
<div style="left:521px;top:619px;width:140px;height:21px;background:#1c1c1c;border:1px solid #323232;border-radius:2px;box-sizing:border-box;"></div>
<span class="j" style="left:529px;top:622.0px;line-height:16px;font-size:12px;color:#d2d2d2;transform:scaleX(0.875);transform-origin:0 50%;">デジタル</span>
<svg style="left:646px;top:626.0px;" width="10" height="7" viewBox="0 0 10 7"><path d="M1 1.500l4 4 4-4" fill="none" stroke="#c0c0c0" stroke-width="1.100"/></svg>
<div style="left:356px;top:651.5px;width:2px;height:2px;background:#3a3a3a;"></div>
<svg style="left:374.5px;top:642.5px;" width="14" height="16" viewBox="0 0 14 16"><circle cx="7" cy="9.400" r="4.700" fill="none" stroke="#b0b0b0" stroke-width="1.300"/><path d="M5.300 2.600h3.400" stroke="#b0b0b0" stroke-width="1.400"/><path d="M7 2.600v2M2.600 4.300l1.300 1.300" stroke="#b0b0b0" stroke-width="1.200"/></svg>
<span class="j" style="left:394px;top:644.0px;line-height:16px;font-size:12px;color:#d2d2d2;transform:scaleX(0.833);transform-origin:0 50%;">サイドオプション</span>
<div style="left:521px;top:642px;width:129px;height:21px;background:#1c1c1c;border:1px solid #323232;border-radius:2px;box-sizing:border-box;"></div>
<span class="j" style="left:529px;top:645.0px;line-height:16px;font-size:12px;color:#d2d2d2;transform:scaleX(0.938);transform-origin:0 50%;">両サイド</span>
<svg style="left:635px;top:649.0px;" width="10" height="7" viewBox="0 0 10 7"><path d="M1 1.500l4 4 4-4" fill="none" stroke="#c0c0c0" stroke-width="1.100"/></svg>
<div style="left:325px;top:660px;width:364px;height:1px;background:#232323;"></div>
<div style="left:689px;top:70px;width:1008px;height:591px;background:#232323;border:1px solid #2d8ceb;box-sizing:border-box;"></div>
<svg style="left:699px;top:81px;" width="7" height="7" viewBox="0 0 7 7"><path d="M0.800 0.800l5 5M5.800 0.800l-5 5" stroke="#8a8a8a" stroke-width="1"/></svg>
<div style="left:715px;top:78px;width:10px;height:10px;background:#b9a583;"></div>
<svg style="left:735px;top:77px;" width="10" height="11" viewBox="0 0 10 11"><path d="M2.500 5V3a2.300 2.300 0 0 1 4.600-.2" fill="none" stroke="#b4b4b4" stroke-width="1.300"/><rect x="1" y="5" width="8" height="5.500" fill="#b4b4b4"/><rect x="4.300" y="6.500" width="1.400" height="2.200" fill="#232323"/></svg>
<span class="j" style="left:753px;top:76.0px;line-height:16px;font-size:12px;color:#d0d0d0;transform:scaleX(0.762);transform-origin:0 50%;">コンポジション</span>
<span class="j" style="left:821px;top:76.0px;line-height:16px;font-size:12px;color:#2d8ceb;transform:scaleX(0.979);transform-origin:0 50%;">音声波形</span>
<svg style="left:877px;top:80px;" width="10" height="9" viewBox="0 0 10 9"><path d="M0 0.500h8M0 4h8M0 7.500h8" stroke="#c0c0c0" stroke-width="1.100"/></svg>
<div style="left:709px;top:100px;width:80px;height:18px;background:#1a1a1a;border:1px solid #2c2c2c;border-radius:2px;box-sizing:border-box;"></div>
<span class="j" style="left:718px;top:101.0px;line-height:16px;font-size:12px;color:#2d8ceb;transform:scaleX(0.979);transform-origin:0 50%;">音声波形</span>
<div style="left:690px;top:121px;width:1006px;height:1px;background:#0e0e0e;"></div>
<div style="left:690px;top:122px;width:1006px;height:1px;background:#1c1c1c;"></div>
<svg style="left:690px;top:123px;" width="1006" height="515" viewBox="690 123 1006 515"><defs><pattern id="ck" x="913" y="262" width="16" height="16" patternUnits="userSpaceOnUse"><rect width="16" height="16" fill="#fff"/><rect x="8" width="8" height="8" fill="#ccc"/><rect y="8" width="8" height="8" fill="#ccc"/></pattern></defs><rect x="913" y="262" width="480" height="270" fill="url(#ck)"/><g stroke="#63e2ff" stroke-width="8.200" stroke-linecap="round"><path d="M1091.4 398.0L1076.6 398.0"/><path d="M1087.6 378.4L1084.3 377.8"/><path d="M1091.8 359.0L1091.8 359.0"/><path d="M1101.2 341.3L1101.2 341.3"/><path d="M1119.8 331.8L1107.9 319.9"/><path d="M1131.1 315.8L1127.6 310.6"/><path d="M1148.4 307.1L1145.6 300.4"/><path d="M1166.4 299.3L1165.8 296.6"/><path d="M1186.0 296.0L1186.0 296.0"/><path d="M1205.9 298.0L1205.9 298.0"/><path d="M1225.0 303.8L1225.0 303.8"/><path d="M1242.7 313.2L1242.7 313.2"/><path d="M1258.1 325.9L1258.1 325.9"/><path d="M1270.8 341.3L1270.8 341.3"/><path d="M1280.2 359.0L1280.2 359.0"/><path d="M1286.0 378.1L1286.0 378.1"/><path d="M1288.0 398.0L1288.0 398.0"/><path d="M1286.0 417.9L1286.0 417.9"/><path d="M1280.2 437.0L1280.2 437.0"/><path d="M1269.6 453.9L1272.0 455.5"/><path d="M1258.1 470.1L1258.1 470.1"/><path d="M1242.7 482.8L1242.7 482.8"/><path d="M1225.0 492.2L1225.0 492.2"/><path d="M1205.9 498.0L1205.9 498.0"/><path d="M1186.0 496.3L1186.0 503.7"/><path d="M1166.4 496.7L1165.8 499.4"/><path d="M1150.8 483.1L1143.2 501.4"/><path d="M1129.3 482.8L1129.3 482.8"/><path d="M1116.1 467.9L1111.6 472.4"/><path d="M1101.2 454.7L1101.2 454.7"/><path d="M1091.8 437.0L1091.8 437.0"/><path d="M1086.9 417.7L1085.1 418.1"/></g><circle cx="1186" cy="398" r="102" fill="none" stroke="#9fc7c0" stroke-width="1.300"/><rect x="1084.500" y="296.500" width="203.500" height="203" fill="none" stroke="#000" stroke-opacity="0.300" stroke-width="1.200"/><rect x="1081.5" y="293.5" width="6" height="6" fill="#d4d4d4" fill-opacity="0.800" stroke="#8c8c8c" stroke-width="0.900"/><rect x="1081.5" y="395.0" width="6" height="6" fill="#d4d4d4" fill-opacity="0.800" stroke="#8c8c8c" stroke-width="0.900"/><rect x="1081.5" y="496.5" width="6" height="6" fill="#d4d4d4" fill-opacity="0.800" stroke="#8c8c8c" stroke-width="0.900"/><rect x="1183.0" y="293.5" width="6" height="6" fill="#d4d4d4" fill-opacity="0.800" stroke="#8c8c8c" stroke-width="0.900"/><rect x="1183.0" y="496.5" width="6" height="6" fill="#d4d4d4" fill-opacity="0.800" stroke="#8c8c8c" stroke-width="0.900"/><rect x="1284.5" y="293.5" width="6" height="6" fill="#d4d4d4" fill-opacity="0.800" stroke="#8c8c8c" stroke-width="0.900"/><rect x="1284.5" y="395.0" width="6" height="6" fill="#d4d4d4" fill-opacity="0.800" stroke="#8c8c8c" stroke-width="0.900"/><rect x="1284.5" y="496.5" width="6" height="6" fill="#d4d4d4" fill-opacity="0.800" stroke="#8c8c8c" stroke-width="0.900"/><circle cx="1186.500" cy="398.500" r="3" fill="#c8c8c8" stroke="#a0a0a0" stroke-width="1"/><path d="M1186.500 393v11M1181 398.500h11" stroke="#b4b4b4" stroke-width="0.800"/><path d="M979.500 212.200L1035.900 241.800 1047.500 221.500 1080.400 293.900 1002.200 306.300 1012.600 286 956.800 254.600z" fill="#ed1c24"/><path d="M1075.800 510.200L996.500 521.500 1012.700 538.300 968.200 584.500 1002.900 618.800 1047.400 573.400 1065 589.500z" fill="#ed1c24"/></svg>
<div style="left:690px;top:638px;width:1006px;height:1px;background:#151515;"></div>
<div style="left:690px;top:639px;width:1006px;height:21px;background:#232323;"></div>
<div style="left:694px;top:640px;width:70px;height:19px;background:#1c1c1c;border:1px solid #323232;border-radius:2px;box-sizing:border-box;"></div>
<span class="j" style="left:701px;top:642.0px;line-height:16px;font-size:12px;color:#d2d2d2;transform:scaleX(0.914);transform-origin:0 50%;">25 %</span>
<svg style="left:749px;top:646.0px;" width="10" height="7" viewBox="0 0 10 7"><path d="M1 1.500l4 4 4-4" fill="none" stroke="#c0c0c0" stroke-width="1.100"/></svg>
<div style="left:769px;top:642px;width:1px;height:15px;background:#333;"></div>
<div style="left:775px;top:640px;width:86px;height:19px;background:#1c1c1c;border:1px solid #323232;border-radius:2px;box-sizing:border-box;"></div>
<span class="j" style="left:781px;top:642.0px;line-height:16px;font-size:12px;color:#d2d2d2;transform:scaleX(0.854);transform-origin:0 50%;">フル画質</span>
<svg style="left:846px;top:646.0px;" width="10" height="7" viewBox="0 0 10 7"><path d="M1 1.500l4 4 4-4" fill="none" stroke="#c0c0c0" stroke-width="1.100"/></svg>
<div style="left:866px;top:642px;width:1px;height:15px;background:#333;"></div>
<svg style="left:874px;top:642px;" width="16" height="15" viewBox="0 0 16 15"><rect x="1" y="1" width="13" height="11" fill="none" stroke="#c0c0c0" stroke-width="1.300"/><path d="M8.500 2.500L5 7h2.500L6 10.500 10 6H7.500z" fill="#c0c0c0"/><path d="M10.500 11h5l-2.500 2.600z" fill="#c0c0c0"/></svg>
<div style="left:893px;top:639px;width:21px;height:20px;background:#1a1a1a;border:1px solid #2e2e2e;border-radius:3px;box-sizing:border-box;"></div>
<div style="left:915px;top:639px;width:21px;height:20px;background:#1a1a1a;border:1px solid #2e2e2e;border-radius:3px;box-sizing:border-box;"></div>
<svg style="left:897px;top:644px;" width="14" height="11" viewBox="0 0 14 11"><rect x="1.00" y="1.00" width="3" height="3" fill="#2d8ceb"/><rect x="1.00" y="4.00" width="3" height="3" fill="#10202f"/><rect x="1.00" y="7.00" width="3" height="3" fill="#2d8ceb"/><rect x="4.00" y="1.00" width="3" height="3" fill="#10202f"/><rect x="4.00" y="4.00" width="3" height="3" fill="#2d8ceb"/><rect x="4.00" y="7.00" width="3" height="3" fill="#10202f"/><rect x="7.00" y="1.00" width="3" height="3" fill="#2d8ceb"/><rect x="7.00" y="4.00" width="3" height="3" fill="#10202f"/><rect x="7.00" y="7.00" width="3" height="3" fill="#2d8ceb"/><rect x="10.00" y="1.00" width="3" height="3" fill="#10202f"/><rect x="10.00" y="4.00" width="3" height="3" fill="#2d8ceb"/><rect x="10.00" y="7.00" width="3" height="3" fill="#10202f"/><rect x="0.750" y="0.750" width="12.500" height="9.500" fill="none" stroke="#2d8ceb" stroke-width="1.500"/></svg>
<svg style="left:918px;top:642px;" width="16" height="14" viewBox="0 0 16 14"><path d="M7.300 1.800H14V11.700H2V6.800z" fill="none" stroke="#2d8ceb" stroke-width="1.400"/><rect x="6" y="0.500" width="2.600" height="2.600" fill="#2d8ceb"/><rect x="12.700" y="0.500" width="2.600" height="2.600" fill="#2d8ceb"/><rect x="12.700" y="10.400" width="2.600" height="2.600" fill="#2d8ceb"/><rect x="0.700" y="10.400" width="2.600" height="2.600" fill="#2d8ceb"/><rect x="0.700" y="5.500" width="2.600" height="2.600" fill="#2d8ceb"/><rect x="12.900" y="5.600" width="2.200" height="2.200" fill="#2d8ceb"/></svg>
<svg style="left:940px;top:643px;" width="16" height="13" viewBox="0 0 16 13"><rect x="0.750" y="0.750" width="14" height="11" fill="none" stroke="#c0c0c0" stroke-width="1.300"/><rect x="4" y="3.500" width="7.500" height="5.500" fill="#c0c0c0"/></svg>
<svg style="left:961px;top:641px;" width="18" height="17" viewBox="0 0 18 17"><rect x="2.500" y="2.500" width="12" height="9" fill="none" stroke="#c0c0c0" stroke-width="1.300"/><path d="M8.500 0v4.500M8.500 9.500V14M0 7h4M13 7h4M7 7h3M8.500 5.500v3" stroke="#c0c0c0" stroke-width="1.200"/><path d="M10.500 14.500h5l-2.500 2.500z" fill="#c0c0c0"/></svg>
<div style="left:985px;top:642px;width:1px;height:15px;background:#333;"></div>
<svg style="left:994px;top:642px;" width="17" height="17" viewBox="0 0 17 17"><circle cx="7.500" cy="4" r="3.200" fill="#f02020"/><circle cx="4.500" cy="8.800" r="3.200" fill="#20c040"/><circle cx="9.800" cy="8.800" r="3.200" fill="#3a6af0"/><path d="M10.500 13.500h5.500l-2.750 2.800z" fill="#c0c0c0"/></svg>
<svg style="left:1016px;top:642px;" width="15" height="15" viewBox="0 0 15 15"><circle cx="7.500" cy="7.500" r="6.300" fill="#c0c0c0"/><circle cx="7.500" cy="7.500" r="2" fill="#232323"/><path d="M7.500 1l2 5M13.500 5l-5 2M13 11.500l-4-3M7 14l.500-5M1.500 10l5-2M2.500 3.500l4 3" stroke="#232323" stroke-width="0.900"/></svg>
<span class="j" style="left:1037px;top:641.5px;line-height:16px;font-size:12px;color:#2d8ceb;transform:scaleX(0.802);transform-origin:0 50%;">+0.0</span>
<div style="left:1073px;top:642px;width:1px;height:15px;background:#333;"></div>
<svg style="left:1082px;top:643px;" width="16" height="13" viewBox="0 0 16 13"><path d="M0.500 3h3.500l1.200-2h5.600l1.200 2h3.500v9.500H0.500z" fill="#c0c0c0"/><circle cx="8" cy="7.500" r="2.900" fill="#232323"/><circle cx="8" cy="7.500" r="1.700" fill="#c0c0c0"/></svg>
<svg style="left:1103px;top:641px;" width="20" height="15" viewBox="0 0 20 15"><path d="M1 9.500c3-5 10-5 13 0-3 5-10 5-13 0z" fill="none" stroke="#444" stroke-width="1.400"/><circle cx="7.500" cy="9.500" r="2.200" fill="#444"/><path d="M12 2.500h2l.600-1h2.800l.600 1h1.500v4.500H14" fill="none" stroke="#444" stroke-width="1.100"/></svg>
<div style="left:1127px;top:642px;width:1px;height:15px;background:#333;"></div>
<div style="left:1133px;top:640px;width:70px;height:19px;background:#1c1c1c;border:1px solid #2e2e2e;border-radius:2px;box-sizing:border-box;"></div>
<span class="j" style="left:1143px;top:642.5px;line-height:14px;font-size:11px;color:#8a8a8a;transform:scaleX(0.923);transform-origin:0 50%;">0:00:00:00</span>
<div style="left:1208px;top:642px;width:1px;height:15px;background:#333;"></div>
<div style="left:1697px;top:70px;width:4px;height:591px;background:#181818;"></div>
<div style="left:1701px;top:70px;width:219px;height:591px;background:#232323;"></div>
<span class="j" style="left:1713px;top:75.5px;line-height:16px;font-size:12px;color:#a4a4a4;transform:scaleX(0.733);transform-origin:0 50%;">プレビュー</span>
<span class="j" style="left:1713px;top:105.5px;line-height:16px;font-size:12px;color:#a4a4a4;transform:scaleX(0.758);transform-origin:0 50%;">エフェクト&amp;プリセット</span>
<span class="j" style="left:1713px;top:135.5px;line-height:16px;font-size:12px;color:#a4a4a4;transform:scaleX(0.694);transform-origin:0 50%;">CC ライブラリ</span>
<span class="j" style="left:1713px;top:165.5px;line-height:16px;font-size:12px;color:#a4a4a4;transform:scaleX(0.958);transform-origin:0 50%;">文字</span>
<span class="j" style="left:1713px;top:195.5px;line-height:16px;font-size:12px;color:#a4a4a4;transform:scaleX(0.958);transform-origin:0 50%;">段落</span>
<span class="j" style="left:1713px;top:225.5px;line-height:16px;font-size:12px;color:#a4a4a4;transform:scaleX(0.717);transform-origin:0 50%;">トラッカー</span>
<span class="j" style="left:1713px;top:385.5px;line-height:16px;font-size:12px;color:#a4a4a4;transform:scaleX(0.722);transform-origin:0 50%;">ブラシ</span>
<span class="j" style="left:1713px;top:415.5px;line-height:16px;font-size:12px;color:#a4a4a4;transform:scaleX(0.750);transform-origin:0 50%;">ペイント</span>
<span class="j" style="left:1713px;top:445.5px;line-height:16px;font-size:12px;color:#a4a4a4;transform:scaleX(0.717);transform-origin:0 50%;">ウィグラー</span>
<span class="j" style="left:1713px;top:475.5px;line-height:16px;font-size:12px;color:#a4a4a4;transform:scaleX(0.733);transform-origin:0 50%;">プロパティ</span>
<div style="left:1702px;top:97px;width:204px;height:2px;background:#141414;"></div>
<div style="left:1702px;top:127px;width:204px;height:2px;background:#141414;"></div>
<div style="left:1702px;top:157px;width:204px;height:2px;background:#141414;"></div>
<div style="left:1702px;top:187px;width:204px;height:2px;background:#141414;"></div>
<div style="left:1702px;top:217px;width:204px;height:2px;background:#141414;"></div>
<div style="left:1702px;top:247px;width:204px;height:2px;background:#141414;"></div>
<div style="left:1702px;top:377px;width:204px;height:2px;background:#141414;"></div>
<div style="left:1702px;top:407px;width:204px;height:2px;background:#141414;"></div>
<div style="left:1702px;top:437px;width:204px;height:2px;background:#141414;"></div>
<div style="left:1702px;top:467px;width:204px;height:2px;background:#141414;"></div>
<div style="left:1702px;top:497px;width:204px;height:2px;background:#141414;"></div>
<span class="j" style="left:1713px;top:255.5px;line-height:16px;font-size:12px;color:#e0e0e0;transform:scaleX(0.958);transform-origin:0 50%;">整列</span>
<svg style="left:1887px;top:260px;" width="10" height="9" viewBox="0 0 10 9"><path d="M0 0.500h8M0 4h8M0 7.500h8" stroke="#c0c0c0" stroke-width="1.100"/></svg>
<span class="j" style="left:1709px;top:282.0px;line-height:16px;font-size:12px;color:#a4a4a4;transform:scaleX(0.860);transform-origin:0 50%;">レイヤーを整列 :</span>
<div style="left:1795px;top:281px;width:110px;height:18px;background:#1c1c1c;border:1px solid #323232;border-radius:2px;box-sizing:border-box;"></div>
<span class="j" style="left:1801px;top:282.5px;line-height:16px;font-size:12px;color:#d2d2d2;transform:scaleX(0.762);transform-origin:0 50%;">コンポジション</span>
<svg style="left:1890px;top:286.5px;" width="10" height="7" viewBox="0 0 10 7"><path d="M1 1.500l4 4 4-4" fill="none" stroke="#c0c0c0" stroke-width="1.100"/></svg>
<div style="left:1707px;top:327px;width:198px;height:1px;background:#303030;"></div>
<span class="j" style="left:1709px;top:330.5px;line-height:16px;font-size:12px;color:#a4a4a4;transform:scaleX(0.860);transform-origin:0 50%;">レイヤーを配置 :</span>
<svg style="left:1711px;top:305px;" width="18" height="18" viewBox="0 0 18 18"><path d="M2 1v16" stroke="#b8b8b8" stroke-width="1"/><rect x="3.500" y="3.500" width="7" height="4.500" fill="#b8b8b8"/><rect x="3.500" y="10" width="12" height="4.500" fill="#b8b8b8"/></svg>
<svg style="left:1745.5px;top:305px;" width="18" height="18" viewBox="0 0 18 18"><path d="M9 1v16" stroke="#b8b8b8" stroke-width="1"/><rect x="5.500" y="3.500" width="7" height="4.500" fill="#b8b8b8"/><rect x="3" y="10" width="12" height="4.500" fill="#b8b8b8"/></svg>
<svg style="left:1780px;top:305px;" width="18" height="18" viewBox="0 0 18 18"><path d="M16 1v16" stroke="#b8b8b8" stroke-width="1"/><rect x="7.500" y="3.500" width="7" height="4.500" fill="#b8b8b8"/><rect x="2.500" y="10" width="12" height="4.500" fill="#b8b8b8"/></svg>
<svg style="left:1814px;top:305px;" width="18" height="18" viewBox="0 0 18 18"><path d="M1 2h16" stroke="#b8b8b8" stroke-width="1"/><rect x="3.500" y="3.500" width="4.500" height="12" fill="#b8b8b8"/><rect x="10" y="3.500" width="4.500" height="7" fill="#b8b8b8"/></svg>
<svg style="left:1848px;top:305px;" width="18" height="18" viewBox="0 0 18 18"><path d="M1 9h16" stroke="#b8b8b8" stroke-width="1"/><rect x="3.500" y="3" width="4.500" height="12" fill="#b8b8b8"/><rect x="10" y="5.500" width="4.500" height="7" fill="#b8b8b8"/></svg>
<svg style="left:1882px;top:305px;" width="18" height="18" viewBox="0 0 18 18"><path d="M1 16h16" stroke="#b8b8b8" stroke-width="1"/><rect x="3.500" y="2.500" width="4.500" height="12" fill="#b8b8b8"/><rect x="10" y="7.500" width="4.500" height="7" fill="#b8b8b8"/></svg>
<svg style="left:1711px;top:348px;" width="18" height="18" viewBox="0 0 18 18"><path d="M1 1.500h16M1 10.500h16" stroke="#454545"/><rect x="5" y="3" width="8" height="4" fill="#454545"/><rect x="3.500" y="12" width="11" height="4.500" fill="#454545"/></svg>
<svg style="left:1745.5px;top:348px;" width="18" height="18" viewBox="0 0 18 18"><path d="M1 4.500h16M1 13.500h16" stroke="#454545"/><rect x="5" y="2.500" width="8" height="4" fill="#454545"/><rect x="3.500" y="11.500" width="11" height="4.500" fill="#454545"/></svg>
<svg style="left:1780px;top:348px;" width="18" height="18" viewBox="0 0 18 18"><path d="M1 7h16M1 16.500h16" stroke="#454545"/><rect x="5" y="2" width="8" height="4" fill="#454545"/><rect x="3.500" y="11" width="11" height="4.500" fill="#454545"/></svg>
<svg style="left:1814px;top:348px;" width="18" height="18" viewBox="0 0 18 18"><path d="M1.500 1v16M11.500 1v16" stroke="#454545"/><rect x="3" y="3.500" width="4.500" height="11" fill="#454545"/><rect x="13" y="5" width="4" height="8" fill="#454545"/></svg>
<svg style="left:1848px;top:348px;" width="18" height="18" viewBox="0 0 18 18"><path d="M4.500 1v16M13.500 1v16" stroke="#454545"/><rect x="2.500" y="3.500" width="4.500" height="11" fill="#454545"/><rect x="11.500" y="5" width="4" height="8" fill="#454545"/></svg>
<svg style="left:1882px;top:348px;" width="18" height="18" viewBox="0 0 18 18"><path d="M7 1v16M16.500 1v16" stroke="#454545"/><rect x="2" y="3.500" width="4.500" height="11" fill="#454545"/><rect x="12" y="5" width="4" height="8" fill="#454545"/></svg>
<div style="left:0px;top:661px;width:1920px;height:4px;background:#181818;"></div>
<div style="left:0px;top:665px;width:1920px;height:368px;background:#232323;"></div>
<span class="j" style="left:30px;top:671.0px;line-height:16px;font-size:12px;color:#a0a0a0;transform:scaleX(0.750);transform-origin:0 50%;">レンダーキュー</span>
<svg style="left:133px;top:676px;" width="7" height="7" viewBox="0 0 7 7"><path d="M0.800 0.800l5 5M5.800 0.800l-5 5" stroke="#8a8a8a" stroke-width="1"/></svg>
<div style="left:148px;top:673px;width:10px;height:10px;background:#b9a583;"></div>
<span class="j" style="left:170px;top:671.0px;line-height:16px;font-size:12px;color:#d8d8d8;transform:scaleX(0.979);transform-origin:0 50%;">音声波形</span>
<svg style="left:229px;top:676px;" width="10" height="9" viewBox="0 0 10 9"><path d="M0 0.500h8M0 4h8M0 7.500h8" stroke="#c0c0c0" stroke-width="1.100"/></svg>
<div style="left:133px;top:689px;width:104px;height:2px;background:#d0d0d0;"></div>
<span class="j" style="left:19px;top:695.0px;line-height:18px;font-size:15px;color:#2f8eed;letter-spacing:0.06px;font-weight:bold;">0:00:00:00</span>
<span class="j" style="left:14px;top:712.0px;line-height:13px;font-size:11px;color:#2568b0;transform:scaleX(0.997);transform-origin:0 50%;">00000 (60.00 fps)</span>
<div style="left:113px;top:701px;width:494px;height:19px;background:#171717;border:1px solid #2b2b2b;border-radius:2px;box-sizing:border-box;"></div>
<svg style="left:119px;top:704px;" width="16" height="13" viewBox="0 0 16 13"><circle cx="6.500" cy="5" r="3.300" fill="none" stroke="#b8b8b8" stroke-width="1.300"/><path d="M4.300 7.600L1 11.500" stroke="#b8b8b8" stroke-width="1.400"/><path d="M10.500 8h5l-2.500 2.600z" fill="#b8b8b8"/></svg>
<svg style="left:622px;top:703px;" width="20" height="14" viewBox="0 0 20 14"><path d="M1 3h4M8 3h7M5 3h3v7h7M8 6.500h0" fill="none" stroke="#b4b4b4" stroke-width="1.100"/><rect x="2" y="1.500" width="4" height="3" rx="1" fill="#b4b4b4"/><rect x="11" y="1.500" width="5" height="3" rx="1" fill="#b4b4b4"/><rect x="11" y="8.500" width="5" height="3" rx="1" fill="#b4b4b4"/><path d="M13 12.500h5l-2.500 2z" fill="#b4b4b4"/></svg>
<svg style="left:657px;top:703px;" width="17" height="13" viewBox="0 0 17 13"><path d="M3 6.500a5.500 5.500 0 0 1 11 0z" fill="none" stroke="#b4b4b4" stroke-width="1.300"/><path d="M0.500 7h16v5.500H0.500z" fill="#6a6a6a"/><path d="M0.500 7h16" stroke="#b4b4b4" stroke-width="1.400"/><path d="M8.500 2v9" stroke="#b4b4b4" stroke-width="1.400"/><path d="M5.500 4.500h2M9.500 4.500h2" stroke="#b4b4b4" stroke-width="1"/></svg>
<svg style="left:683px;top:702px;" width="16" height="15" viewBox="0 0 16 15"><rect x="4.500" y="0.500" width="11" height="10.500" fill="#8a8a8a" stroke="#b4b4b4"/><path d="M6.500 0.500v10.500M13.500 0.500v10.500" stroke="#b4b4b4" stroke-dasharray="1.500 1.200"/><path d="M8 5.500h4" stroke="#232323" stroke-width="1.300"/><path d="M2.500 3v10.500h11" fill="none" stroke="#b4b4b4" stroke-width="1"/><path d="M0.800 5v10h11" fill="none" stroke="#b4b4b4" stroke-width="1" stroke-dasharray="1.500 1"/></svg>
<svg style="left:709px;top:702px;" width="16" height="15" viewBox="0 0 16 15"><ellipse cx="6.500" cy="10.500" rx="5" ry="3.800" transform="rotate(-35 6.500 10.500)" fill="none" stroke="#b4b4b4" stroke-width="1.200"/><ellipse cx="8" cy="8.500" rx="5" ry="3.800" transform="rotate(-35 8 8.500)" fill="#232323" stroke="#b4b4b4" stroke-width="1.200"/><ellipse cx="9.500" cy="6" rx="5.500" ry="4.300" transform="rotate(-35 9.500 6)" fill="#8a8a8a" stroke="#b4b4b4" stroke-width="1"/></svg>
<svg style="left:742px;top:702px;" width="18" height="16" viewBox="0 0 18 16"><rect x="2" y="2.500" width="14.500" height="12" fill="none" stroke="#b4b4b4" stroke-width="1.300"/><path d="M4 6c4 0 5 6 10 6" fill="none" stroke="#b4b4b4" stroke-width="1.200"/><path d="M5.500 0.500v2M9.500 0.500v2M13.500 0.500v2M0.500 5h1.500M0.500 9h1.500M0.500 12.500h1.500" stroke="#b4b4b4" stroke-width="1.100"/></svg>
<div style="left:2px;top:727px;width:773px;height:2px;background:#121212;"></div>
<div style="left:2px;top:729px;width:773px;height:18px;background:#262626;"></div>
<div style="left:2px;top:747px;width:773px;height:1px;background:#141414;"></div>
<svg style="left:6.5px;top:734.5px;" width="12" height="8" viewBox="0 0 12 8"><path d="M0.500 4c2.500-4.500 8.500-4.500 11 0-2.500 4.500-8.500 4.500-11 0z" fill="#c0c0c0"/><circle cx="6" cy="4" r="2.300" fill="#262626"/><circle cx="6" cy="4" r="1.200" fill="#c0c0c0"/></svg>
<svg style="left:21.5px;top:732.5px;" width="13" height="12" viewBox="0 0 13 12"><path d="M0.500 4h2.500L6 1v10L3 8H0.500z" fill="#c0c0c0"/><path d="M7.500 3.500a3.500 3.500 0 0 1 0 5M9 1.500a6 6 0 0 1 0 9" fill="none" stroke="#c0c0c0" stroke-width="1.200"/></svg>
<div style="left:39px;top:735px;width:7px;height:7px;background:#c0c0c0;border-radius:4px;"></div>
<svg style="left:52px;top:733px;" width="11" height="11" viewBox="0 0 11 11"><path d="M2.800 5V3.600a2.700 2.700 0 0 1 5.400 0V5" fill="none" stroke="#c0c0c0" stroke-width="1.400"/><rect x="1" y="4.600" width="9" height="5.600" fill="#c0c0c0"/><rect x="4.800" y="6" width="1.400" height="2.600" fill="#262626"/></svg>
<div style="left:69px;top:733px;width:1px;height:12px;background:#3e3e3e;"></div>
<div style="left:101px;top:733px;width:1px;height:12px;background:#3e3e3e;"></div>
<div style="left:134px;top:733px;width:1px;height:12px;background:#3e3e3e;"></div>
<div style="left:339px;top:733px;width:1px;height:12px;background:#3e3e3e;"></div>
<div style="left:476px;top:733px;width:1px;height:12px;background:#3e3e3e;"></div>
<div style="left:643px;top:733px;width:1px;height:12px;background:#3e3e3e;"></div>
<div style="left:759px;top:733px;width:1px;height:12px;background:#3e3e3e;"></div>
<svg style="left:83px;top:732px;" width="14" height="13" viewBox="0 0 14 13"><path d="M1 1h5.500l6 6.200-4.800 4.800L1.800 6z" fill="#b0b0b0"/><circle cx="3.800" cy="3.800" r="1" fill="#262626"/></svg>
<span class="j" style="left:108px;top:733.5px;line-height:12px;font-size:10px;color:#7a84a8;">#</span>
<span class="j" style="left:140px;top:730.5px;line-height:16px;font-size:12px;color:#c8c8c8;transform:scaleX(0.917);transform-origin:0 50%;">ソース名</span>
<svg style="left:344px;top:733.5px;" width="12" height="10" viewBox="0 0 12 10"><path d="M1.500 5.500a4.500 4.500 0 0 1 9 0z" fill="none" stroke="#c0c0c0" stroke-width="1.100"/><path d="M0 7.500h12" stroke="#c0c0c0" stroke-width="1.300"/><path d="M6 1.500v7.500" stroke="#c0c0c0" stroke-width="1.100"/><path d="M3.500 4h1.500M7 4h1.500" stroke="#c0c0c0" stroke-width="1"/></svg>
<svg style="left:359px;top:732px;" width="13" height="13" viewBox="0 0 13 13"><path d="M6.500 1v11M1 6.500h11M2.600 2.600l7.800 7.800M10.400 2.600l-7.800 7.800" stroke="#c0c0c0" stroke-width="1"/><circle cx="6.500" cy="6.500" r="2" fill="#262626" stroke="#c0c0c0"/></svg>
<svg style="left:374px;top:733px;" width="12" height="12" viewBox="0 0 12 12"><path d="M1 1l10 10" stroke="#c0c0c0" stroke-width="1.300" stroke-dasharray="2.200 1.200"/></svg>
<span class="i" style="left:389px;top:730.0px;line-height:16px;font-size:15px;color:#c0c0c0;letter-spacing:-0.3px;">fx</span>
<svg style="left:404px;top:732px;" width="13" height="13" viewBox="0 0 13 13"><rect x="0.500" y="0.500" width="12" height="12" fill="none" stroke="#c0c0c0"/><path d="M2.500 0.500v12M10.500 0.500v12" stroke="#c0c0c0" stroke-dasharray="1.500 1.200"/><rect x="4" y="3" width="5" height="7" fill="#c0c0c0"/></svg>
<svg style="left:418px;top:732px;" width="15" height="14" viewBox="0 0 15 14"><ellipse cx="6" cy="8.500" rx="5" ry="3.800" transform="rotate(-30 6 8.500)" fill="none" stroke="#c0c0c0" stroke-width="1.100"/><ellipse cx="8.500" cy="6" rx="5.500" ry="4.200" transform="rotate(-30 8.500 6)" fill="#8a8a8a" stroke="#c0c0c0" stroke-width="1"/></svg>
<svg style="left:434px;top:733px;" width="12" height="12" viewBox="0 0 12 12"><circle cx="6" cy="6" r="4.800" fill="#262626" stroke="#c8c8c8" stroke-width="1.200"/><path d="M2.600 2.600a4.800 4.800 0 0 0 6.800 6.800z" fill="#c8c8c8"/></svg>
<svg style="left:449px;top:733px;" width="13" height="12" viewBox="0 0 13 12"><path d="M6.500 1l4.500 2.200v5.600L6.500 11 2 8.800V3.200z" fill="none" stroke="#c0c0c0" stroke-width="1"/><path d="M2 3.200l4.500 2.200 4.500-2.200M6.500 5.400V11" fill="none" stroke="#c0c0c0" stroke-width="1"/></svg>
<span class="j" style="left:483px;top:730.5px;line-height:16px;font-size:12px;color:#c8c8c8;transform:scaleX(0.833);transform-origin:0 50%;">モード</span>
<span class="j" style="left:535px;top:733.0px;line-height:12px;font-size:10px;color:#a0a0a0;">T</span>
<span class="j" style="left:550px;top:730.5px;line-height:16px;font-size:12px;color:#c8c8c8;transform:scaleX(0.758);transform-origin:0 50%;">トラック...</span>
<svg style="left:612px;top:733px;" width="12" height="12" viewBox="0 0 12 12"><rect x="0" y="0" width="12" height="12" fill="#c8c8c8"/><circle cx="6" cy="6" r="3.500" fill="#262626"/></svg>
<svg style="left:627px;top:733px;" width="13" height="12" viewBox="0 0 13 12"><path d="M0.500 0h12L10.500 9.500H3L0.500 12z" fill="#c8c8c8"/><ellipse cx="6.600" cy="5" rx="4" ry="2.500" transform="rotate(-35 6.600 5)" fill="#262626"/></svg>
<span class="j" style="left:648px;top:730.5px;line-height:16px;font-size:12px;color:#c8c8c8;transform:scaleX(0.833);transform-origin:0 50%;">親とリンク</span>
<div style="left:2px;top:748px;width:773px;height:18px;background:#484848;"></div>
<div style="left:2px;top:784px;width:773px;height:1px;background:#1e1e1e;"></div>
<div style="left:2px;top:767px;width:773px;height:18px;background:#262626;"></div>
<div style="left:2px;top:803px;width:773px;height:1px;background:#1e1e1e;"></div>
<div style="left:2px;top:786px;width:773px;height:18px;background:#262626;"></div>
<div style="left:2px;top:822px;width:773px;height:1px;background:#1e1e1e;"></div>
<div style="left:2px;top:805px;width:773px;height:18px;background:#262626;"></div>
<div style="left:2px;top:841px;width:773px;height:1px;background:#1e1e1e;"></div>
<div style="left:2px;top:824px;width:773px;height:18px;background:#262626;"></div>
<div style="left:2px;top:860px;width:773px;height:1px;background:#1e1e1e;"></div>
<div style="left:2px;top:843px;width:773px;height:18px;background:#262626;"></div>
<div style="left:2px;top:879px;width:773px;height:1px;background:#1e1e1e;"></div>
<div style="left:2px;top:862px;width:773px;height:18px;background:#262626;"></div>
<div style="left:2px;top:898px;width:773px;height:1px;background:#1e1e1e;"></div>
<div style="left:2px;top:881px;width:773px;height:18px;background:#262626;"></div>
<div style="left:2px;top:917px;width:773px;height:1px;background:#1e1e1e;"></div>
<div style="left:2px;top:900px;width:773px;height:18px;background:#262626;"></div>
<div style="left:6px;top:750px;width:14px;height:14px;background:#3a3a3a;"></div>
<svg style="left:6.5px;top:753px;" width="12" height="8" viewBox="0 0 12 8"><path d="M0.500 4c2.500-4.500 8.500-4.500 11 0-2.500 4.500-8.500 4.500-11 0z" fill="#c0c0c0"/><circle cx="6" cy="4" r="2.300" fill="#262626"/><circle cx="6" cy="4" r="1.200" fill="#c0c0c0"/></svg>
<div style="left:36px;top:750px;width:13px;height:14px;background:#3a3a3a;"></div>
<div style="left:51px;top:750px;width:13px;height:14px;background:#3a3a3a;"></div>
<svg style="left:74.5px;top:753.5px;" width="10" height="7" viewBox="0 0 10 7"><path d="M1 1.500l4 4 4-4" fill="none" stroke="#c0c0c0" stroke-width="1.100"/></svg>
<div style="left:87px;top:750px;width:14px;height:14px;background:#b93a3c;"></div>
<span class="j" style="left:108px;top:749.0px;line-height:16px;font-size:12px;color:#d2d2d2;">1</span>
<div style="left:138px;top:749px;width:15px;height:16px;background:#ffffff;border:1px solid #111;box-sizing:border-box;"></div>
<div style="left:155px;top:748px;width:184px;height:18px;background:#444444;border:2px solid #8c8c8c;box-sizing:border-box;"></div>
<span class="j" style="left:160px;top:750.0px;line-height:16px;font-size:12px;color:#d8d8d8;transform:scaleX(0.876);transform-origin:0 50%;">1920x1080</span>
<div style="left:344px;top:750px;width:13px;height:14px;background:#3a3a3a;"></div>
<svg style="left:344.5px;top:752px;" width="12" height="10" viewBox="0 0 12 10"><path d="M1.500 5.500a4.500 4.500 0 0 1 9 0z" fill="none" stroke="#c0c0c0" stroke-width="1.100"/><path d="M0 7.500h12" stroke="#c0c0c0" stroke-width="1.300"/><path d="M6 1.500v7.500" stroke="#c0c0c0" stroke-width="1.100"/><path d="M3.500 4h1.500M7 4h1.500" stroke="#c0c0c0" stroke-width="1"/></svg>
<div style="left:359px;top:750px;width:13px;height:14px;background:#3a3a3a;"></div>
<div style="left:374px;top:750px;width:13px;height:14px;background:#3a3a3a;"></div>
<svg style="left:375px;top:751px;" width="12" height="12" viewBox="0 0 12 12"><path d="M1.500 10.500l9-9" stroke="#c8c8c8" stroke-width="1.300"/></svg>
<div style="left:389px;top:750px;width:13px;height:14px;background:#3a3a3a;"></div>
<span class="i" style="left:389px;top:748.0px;line-height:16px;font-size:15px;color:#c8c8c8;letter-spacing:-0.3px;">fx</span>
<div style="left:419px;top:750px;width:13px;height:14px;background:#3a3a3a;"></div>
<div style="left:434px;top:750px;width:13px;height:14px;background:#3a3a3a;"></div>
<div style="left:449px;top:750px;width:13px;height:14px;background:#3a3a3a;"></div>
<div style="left:480px;top:748px;width:45px;height:18px;background:#232323;"></div>
<span class="j" style="left:487px;top:748.5px;line-height:16px;font-size:12px;color:#d2d2d2;letter-spacing:0.00px;">通常</span>
<svg style="left:511px;top:754.0px;" width="10" height="7" viewBox="0 0 10 7"><path d="M1 1.500l4 4 4-4" fill="none" stroke="#c0c0c0" stroke-width="1.100"/></svg>
<div style="left:530px;top:750px;width:13px;height:14px;background:#3a3a3a;"></div>
<svg style="left:546.5px;top:750px;" width="14" height="14" viewBox="0 0 14 14"><path d="M7.0 8.5 L6.7 8.6 L6.3 8.6 L5.9 8.4 L5.5 8.2 L5.2 7.8 L5.0 7.4 L4.9 6.9 L4.9 6.4 L5.1 5.8 L5.4 5.3 L5.9 4.9 L6.4 4.6 L7.1 4.4 L7.8 4.4 L8.5 4.6 L9.1 4.9 L9.7 5.4 L10.2 6.1 L10.5 6.9 L10.6 7.8 L10.4 8.6 L10.1 9.5 L9.5 10.3 L8.7 10.9 L7.8 11.3 L6.8 11.5 L5.7 11.4 L4.7 11.1 L3.7 10.5 L2.9 9.7 L2.4 8.7 L2.0 7.5 L2.0 6.3 L2.3 5.1 L2.8 3.9 L3.7 2.9 L4.8 2.1 L6.0 1.6 L7.4 1.4 L8.8 1.6" fill="none" stroke="#b0b0b0" stroke-width="1.200"/></svg>
<div style="left:559px;top:760px;width:2px;height:2px;background:#b0b0b0;"></div>
<div style="left:559px;top:754px;width:2px;height:2px;background:#b0b0b0;"></div>
<div style="left:564px;top:748px;width:45px;height:18px;background:#232323;"></div>
<span class="j" style="left:571px;top:748.5px;line-height:16px;font-size:12px;color:#d2d2d2;transform:scaleX(0.722);transform-origin:0 50%;">マット</span>
<svg style="left:595px;top:754.0px;" width="10" height="7" viewBox="0 0 10 7"><path d="M1 1.500l4 4 4-4" fill="none" stroke="#c0c0c0" stroke-width="1.100"/></svg>
<svg style="left:646px;top:750px;" width="14" height="14" viewBox="0 0 14 14"><path d="M7.0 8.5 L6.7 8.6 L6.3 8.6 L5.9 8.4 L5.5 8.2 L5.2 7.8 L5.0 7.4 L4.9 6.9 L4.9 6.4 L5.1 5.8 L5.4 5.3 L5.9 4.9 L6.4 4.6 L7.1 4.4 L7.8 4.4 L8.5 4.6 L9.1 4.9 L9.7 5.4 L10.2 6.1 L10.5 6.9 L10.6 7.8 L10.4 8.6 L10.1 9.5 L9.5 10.3 L8.7 10.9 L7.8 11.3 L6.8 11.5 L5.7 11.4 L4.7 11.1 L3.7 10.5 L2.9 9.7 L2.4 8.7 L2.0 7.5 L2.0 6.3 L2.3 5.1 L2.8 3.9 L3.7 2.9 L4.8 2.1 L6.0 1.6 L7.4 1.4 L8.8 1.6" fill="none" stroke="#a8a8a8" stroke-width="1.200"/></svg>
<div style="left:666px;top:748px;width:90px;height:18px;background:#232323;"></div>
<span class="j" style="left:673px;top:748.5px;line-height:16px;font-size:12px;color:#d2d2d2;transform:scaleX(0.875);transform-origin:0 50%;">なし</span>
<svg style="left:742px;top:754.0px;" width="10" height="7" viewBox="0 0 10 7"><path d="M1 1.500l4 4 4-4" fill="none" stroke="#c0c0c0" stroke-width="1.100"/></svg>
<svg style="left:93.5px;top:772.5px;" width="10" height="7" viewBox="0 0 10 7"><path d="M1 1.500l4 4 4-4" fill="none" stroke="#909090" stroke-width="1.100"/></svg>
<span class="j" style="left:113px;top:768.0px;line-height:16px;font-size:12px;color:#d2d2d2;transform:scaleX(0.833);transform-origin:0 50%;">マスク</span>
<div style="left:51px;top:788px;width:14px;height:14px;background:#1c1c1c;"></div>
<svg style="left:112.5px;top:791.5px;" width="10" height="7" viewBox="0 0 10 7"><path d="M1 1.500l4 4 4-4" fill="none" stroke="#909090" stroke-width="1.100"/></svg>
<div style="left:130px;top:789px;width:10px;height:12px;background:#a9cdc8;"></div>
<div style="left:144px;top:786px;width:196px;height:18px;background:#4a4a4a;"></div>
<span class="j" style="left:148px;top:787.0px;line-height:16px;font-size:12px;color:#dcdcdc;transform:scaleX(0.869);transform-origin:0 50%;">マスク 1</span>
<div style="left:344px;top:786px;width:63px;height:18px;background:#1f1f1f;border:1px solid #343434;box-sizing:border-box;"></div>
<span class="j" style="left:351px;top:787.5px;line-height:16px;font-size:12px;color:#d2d2d2;letter-spacing:1.50px;">加算</span>
<svg style="left:393px;top:791.5px;" width="10" height="7" viewBox="0 0 10 7"><path d="M1 1.500l4 4 4-4" fill="none" stroke="#c0c0c0" stroke-width="1.100"/></svg>
<div style="left:412px;top:788px;width:14px;height:14px;background:#1c1c1c;"></div>
<span class="j" style="left:428px;top:787.5px;line-height:16px;font-size:12px;color:#d2d2d2;letter-spacing:0.00px;">反転</span>
<div style="left:134px;top:814px;width:2px;height:1px;background:#3a3a3a;"></div>
<svg style="left:146px;top:805px;" width="14" height="16" viewBox="0 0 14 16"><circle cx="7" cy="9.400" r="4.700" fill="none" stroke="#b0b0b0" stroke-width="1.300"/><path d="M5.300 2.600h3.400" stroke="#b0b0b0" stroke-width="1.400"/><path d="M7 2.600v2M2.600 4.300l1.300 1.300" stroke="#b0b0b0" stroke-width="1.200"/></svg>
<span class="j" style="left:166px;top:806.5px;line-height:16px;font-size:12px;color:#d2d2d2;transform:scaleX(0.900);transform-origin:0 50%;">マスクパス</span>
<svg style="left:659.5px;top:805px;" width="14" height="14" viewBox="0 0 14 14"><path d="M7.0 8.5 L6.7 8.6 L6.3 8.6 L5.9 8.4 L5.5 8.2 L5.2 7.8 L5.0 7.4 L4.9 6.9 L4.9 6.4 L5.1 5.8 L5.4 5.3 L5.9 4.9 L6.4 4.6 L7.1 4.4 L7.8 4.4 L8.5 4.6 L9.1 4.9 L9.7 5.4 L10.2 6.1 L10.5 6.9 L10.6 7.8 L10.4 8.6 L10.1 9.5 L9.5 10.3 L8.7 10.9 L7.8 11.3 L6.8 11.5 L5.7 11.4 L4.7 11.1 L3.7 10.5 L2.9 9.7 L2.4 8.7 L2.0 7.5 L2.0 6.3 L2.3 5.1 L2.8 3.9 L3.7 2.9 L4.8 2.1 L6.0 1.6 L7.4 1.4 L8.8 1.6" fill="none" stroke="#a8a8a8" stroke-width="1.200"/></svg>
<div style="left:134px;top:833px;width:2px;height:1px;background:#3a3a3a;"></div>
<svg style="left:146px;top:824px;" width="14" height="16" viewBox="0 0 14 16"><circle cx="7" cy="9.400" r="4.700" fill="none" stroke="#b0b0b0" stroke-width="1.300"/><path d="M5.300 2.600h3.400" stroke="#b0b0b0" stroke-width="1.400"/><path d="M7 2.600v2M2.600 4.300l1.300 1.300" stroke="#b0b0b0" stroke-width="1.200"/></svg>
<span class="j" style="left:166px;top:825.5px;line-height:16px;font-size:12px;color:#d2d2d2;transform:scaleX(0.958);transform-origin:0 50%;">マスクの境界のぼかし</span>
<svg style="left:659.5px;top:824px;" width="14" height="14" viewBox="0 0 14 14"><path d="M7.0 8.5 L6.7 8.6 L6.3 8.6 L5.9 8.4 L5.5 8.2 L5.2 7.8 L5.0 7.4 L4.9 6.9 L4.9 6.4 L5.1 5.8 L5.4 5.3 L5.9 4.9 L6.4 4.6 L7.1 4.4 L7.8 4.4 L8.5 4.6 L9.1 4.9 L9.7 5.4 L10.2 6.1 L10.5 6.9 L10.6 7.8 L10.4 8.6 L10.1 9.5 L9.5 10.3 L8.7 10.9 L7.8 11.3 L6.8 11.5 L5.7 11.4 L4.7 11.1 L3.7 10.5 L2.9 9.7 L2.4 8.7 L2.0 7.5 L2.0 6.3 L2.3 5.1 L2.8 3.9 L3.7 2.9 L4.8 2.1 L6.0 1.6 L7.4 1.4 L8.8 1.6" fill="none" stroke="#a8a8a8" stroke-width="1.200"/></svg>
<div style="left:134px;top:852px;width:2px;height:1px;background:#3a3a3a;"></div>
<svg style="left:146px;top:843px;" width="14" height="16" viewBox="0 0 14 16"><circle cx="7" cy="9.400" r="4.700" fill="none" stroke="#b0b0b0" stroke-width="1.300"/><path d="M5.300 2.600h3.400" stroke="#b0b0b0" stroke-width="1.400"/><path d="M7 2.600v2M2.600 4.300l1.300 1.300" stroke="#b0b0b0" stroke-width="1.200"/></svg>
<span class="j" style="left:166px;top:844.5px;line-height:16px;font-size:12px;color:#d2d2d2;transform:scaleX(0.979);transform-origin:0 50%;">マスクの不透明度</span>
<svg style="left:659.5px;top:843px;" width="14" height="14" viewBox="0 0 14 14"><path d="M7.0 8.5 L6.7 8.6 L6.3 8.6 L5.9 8.4 L5.5 8.2 L5.2 7.8 L5.0 7.4 L4.9 6.9 L4.9 6.4 L5.1 5.8 L5.4 5.3 L5.9 4.9 L6.4 4.6 L7.1 4.4 L7.8 4.4 L8.5 4.6 L9.1 4.9 L9.7 5.4 L10.2 6.1 L10.5 6.9 L10.6 7.8 L10.4 8.6 L10.1 9.5 L9.5 10.3 L8.7 10.9 L7.8 11.3 L6.8 11.5 L5.7 11.4 L4.7 11.1 L3.7 10.5 L2.9 9.7 L2.4 8.7 L2.0 7.5 L2.0 6.3 L2.3 5.1 L2.8 3.9 L3.7 2.9 L4.8 2.1 L6.0 1.6 L7.4 1.4 L8.8 1.6" fill="none" stroke="#a8a8a8" stroke-width="1.200"/></svg>
<div style="left:134px;top:871px;width:2px;height:1px;background:#3a3a3a;"></div>
<svg style="left:146px;top:862px;" width="14" height="16" viewBox="0 0 14 16"><circle cx="7" cy="9.400" r="4.700" fill="none" stroke="#b0b0b0" stroke-width="1.300"/><path d="M5.300 2.600h3.400" stroke="#b0b0b0" stroke-width="1.400"/><path d="M7 2.600v2M2.600 4.300l1.300 1.300" stroke="#b0b0b0" stroke-width="1.200"/></svg>
<span class="j" style="left:166px;top:863.5px;line-height:16px;font-size:12px;color:#d2d2d2;transform:scaleX(0.972);transform-origin:0 50%;">マスクの拡張</span>
<svg style="left:659.5px;top:862px;" width="14" height="14" viewBox="0 0 14 14"><path d="M7.0 8.5 L6.7 8.6 L6.3 8.6 L5.9 8.4 L5.5 8.2 L5.2 7.8 L5.0 7.4 L4.9 6.9 L4.9 6.4 L5.1 5.8 L5.4 5.3 L5.9 4.9 L6.4 4.6 L7.1 4.4 L7.8 4.4 L8.5 4.6 L9.1 4.9 L9.7 5.4 L10.2 6.1 L10.5 6.9 L10.6 7.8 L10.4 8.6 L10.1 9.5 L9.5 10.3 L8.7 10.9 L7.8 11.3 L6.8 11.5 L5.7 11.4 L4.7 11.1 L3.7 10.5 L2.9 9.7 L2.4 8.7 L2.0 7.5 L2.0 6.3 L2.3 5.1 L2.8 3.9 L3.7 2.9 L4.8 2.1 L6.0 1.6 L7.4 1.4 L8.8 1.6" fill="none" stroke="#a8a8a8" stroke-width="1.200"/></svg>
<span class="j" style="left:345px;top:807.0px;line-height:16px;font-size:12px;color:#3a96f0;transform:scaleX(0.810);transform-origin:0 50%;">シェイプ...</span>
<div style="left:343px;top:826px;width:14px;height:13px;background:#1d1d1d;"></div>
<svg style="left:344px;top:829px;" width="12" height="7" viewBox="0 0 12 7"><rect x="0.700" y="1" width="6" height="4.500" rx="2.200" fill="none" stroke="#c8c8c8" stroke-width="1.200"/><rect x="5.300" y="1" width="6" height="4.500" rx="2.200" fill="none" stroke="#c8c8c8" stroke-width="1.200"/></svg>
<span class="j" style="left:362px;top:825.5px;line-height:16px;font-size:12px;color:#3a96f0;transform:scaleX(0.872);transform-origin:0 50%;">0.0,0.0</span>
<span class="j" style="left:399px;top:826.0px;line-height:16px;font-size:12px;color:#b0b0b0;letter-spacing:0.06px;">pixel</span>
<span class="j" style="left:346px;top:844.5px;line-height:16px;font-size:12px;color:#3a96f0;transform:scaleX(0.849);transform-origin:0 50%;">100</span>
<span class="j" style="left:364px;top:846.5px;line-height:14px;font-size:11px;color:#b0b0b0;">%</span>
<span class="j" style="left:345px;top:863.5px;line-height:16px;font-size:12px;color:#3a96f0;transform:scaleX(0.866);transform-origin:0 50%;">300.0</span>
<span class="j" style="left:376px;top:864.0px;line-height:16px;font-size:12px;color:#b0b0b0;letter-spacing:0.06px;">pixel</span>
<svg style="left:94px;top:885px;" width="7" height="10" viewBox="0 0 7 10"><path d="M1.500 1.400l3.600 3.600-3.600 3.600" fill="none" stroke="#969696" stroke-width="1.100"/></svg>
<span class="j" style="left:113px;top:882.0px;line-height:16px;font-size:12px;color:#d2d2d2;transform:scaleX(0.767);transform-origin:0 50%;">エフェクト</span>
<svg style="left:94px;top:904px;" width="7" height="10" viewBox="0 0 7 10"><path d="M1.500 1.400l3.600 3.600-3.600 3.600" fill="none" stroke="#969696" stroke-width="1.100"/></svg>
<span class="j" style="left:111px;top:901.0px;line-height:16px;font-size:12px;color:#d2d2d2;transform:scaleX(0.875);transform-origin:0 50%;">トランスフォーム</span>
<span class="j" style="left:344px;top:901.5px;line-height:16px;font-size:12px;color:#3d9ff8;transform:scaleX(0.521);transform-origin:0 50%;">リセット</span>
<div style="left:2px;top:919px;width:773px;height:18px;background:#2f2f2f;"></div>
<div style="left:21px;top:921px;width:13px;height:13px;background:#262626;"></div>
<svg style="left:21px;top:922px;" width="13" height="12" viewBox="0 0 13 12"><path d="M0.500 4h2.500L6 1v10L3 8H0.500z" fill="#c0c0c0"/><path d="M7.500 3.500a3.500 3.500 0 0 1 0 5M9 1.500a6 6 0 0 1 0 9" fill="none" stroke="#c0c0c0" stroke-width="1.200"/></svg>
<div style="left:36px;top:921px;width:13px;height:13px;background:#262626;"></div>
<div style="left:51px;top:921px;width:13px;height:13px;background:#262626;"></div>
<svg style="left:74.5px;top:923.5px;" width="7" height="10" viewBox="0 0 7 10"><path d="M1.500 1.400l3.600 3.600-3.600 3.600" fill="none" stroke="#c0c0c0" stroke-width="1.100"/></svg>
<div style="left:87px;top:921px;width:14px;height:14px;background:#b4cfbc;"></div>
<span class="j" style="left:108px;top:920.0px;line-height:16px;font-size:12px;color:#d2d2d2;">2</span>
<svg style="left:140px;top:921px;" width="11" height="15" viewBox="0 0 11 15"><path d="M0 0h7.500L10.500 3V14.500H0z" fill="#f4f4f4"/><circle cx="5.200" cy="7.800" r="3" fill="none" stroke="#e0663c" stroke-width="1.300"/><path d="M2.400 6.500a3 3 0 0 1 3-1.700" fill="none" stroke="#7a3fc8" stroke-width="1.300"/><path d="M4.300 6.300l2.600 1.500-2.600 1.500z" fill="#222"/></svg>
<span class="j" style="left:159px;top:920.5px;line-height:16px;font-size:12px;color:#d2d2d2;transform:scaleX(0.924);transform-origin:0 50%;">音楽.wav</span>
<div style="left:344px;top:921px;width:13px;height:13px;background:#262626;"></div>
<svg style="left:344.5px;top:923px;" width="12" height="10" viewBox="0 0 12 10"><path d="M1.500 5.500a4.500 4.500 0 0 1 9 0z" fill="none" stroke="#c0c0c0" stroke-width="1.100"/><path d="M0 7.500h12" stroke="#c0c0c0" stroke-width="1.300"/><path d="M6 1.500v7.500" stroke="#c0c0c0" stroke-width="1.100"/><path d="M3.500 4h1.500M7 4h1.500" stroke="#c0c0c0" stroke-width="1"/></svg>
<div style="left:374px;top:921px;width:13px;height:13px;background:#262626;"></div>
<svg style="left:375px;top:922px;" width="12" height="12" viewBox="0 0 12 12"><path d="M1.500 10.500l9-9" stroke="#c8c8c8" stroke-width="1.300"/></svg>
<div style="left:434px;top:921px;width:13px;height:13px;background:#262626;"></div>
<svg style="left:646px;top:921px;" width="14" height="14" viewBox="0 0 14 14"><path d="M7.0 8.5 L6.7 8.6 L6.3 8.6 L5.9 8.4 L5.5 8.2 L5.2 7.8 L5.0 7.4 L4.9 6.9 L4.9 6.4 L5.1 5.8 L5.4 5.3 L5.9 4.9 L6.4 4.6 L7.1 4.4 L7.8 4.4 L8.5 4.6 L9.1 4.9 L9.7 5.4 L10.2 6.1 L10.5 6.9 L10.6 7.8 L10.4 8.6 L10.1 9.5 L9.5 10.3 L8.7 10.9 L7.8 11.3 L6.8 11.5 L5.7 11.4 L4.7 11.1 L3.7 10.5 L2.9 9.7 L2.4 8.7 L2.0 7.5 L2.0 6.3 L2.3 5.1 L2.8 3.9 L3.7 2.9 L4.8 2.1 L6.0 1.6 L7.4 1.4 L8.8 1.6" fill="none" stroke="#a8a8a8" stroke-width="1.200"/></svg>
<div style="left:666px;top:919px;width:90px;height:18px;background:#222222;"></div>
<span class="j" style="left:673px;top:919.5px;line-height:16px;font-size:12px;color:#d2d2d2;transform:scaleX(0.875);transform-origin:0 50%;">なし</span>
<svg style="left:742px;top:925.0px;" width="10" height="7" viewBox="0 0 10 7"><path d="M1 1.500l4 4 4-4" fill="none" stroke="#c0c0c0" stroke-width="1.100"/></svg>
<div style="left:775px;top:728px;width:1px;height:285px;background:#0c0c0c;"></div>
<div style="left:775px;top:692px;width:1px;height:36px;background:#1c1c1c;"></div>
<div style="left:776px;top:692px;width:2px;height:36px;background:#232323;"></div>
<div style="left:778px;top:692px;width:1122px;height:36px;background:#232323;"></div>
<div style="left:778px;top:698px;width:1122px;height:1px;background:#111111;"></div>
<div style="left:783px;top:699px;width:1112px;height:8px;background:#5e5e5e;"></div>
<div style="left:776px;top:699px;width:7px;height:8px;background:#2d8ceb;border-radius:4px 0 0 4px;"></div>
<div style="left:1895px;top:699px;width:6px;height:8px;background:#2d8ceb;border-radius:0 4px 4px 0;"></div>
<div style="left:778px;top:707px;width:1122px;height:1px;background:#141414;"></div>
<span class="j" style="left:782px;top:709.0px;line-height:13px;font-size:11px;color:#b8b8b8;transform:scaleX(0.958);transform-origin:0 50%;">00s</span>
<div style="left:876px;top:722px;width:1px;height:5px;background:#8a8a8a;"></div>
<span class="j" style="left:868px;top:709.0px;line-height:13px;font-size:11px;color:#b8b8b8;transform:scaleX(0.958);transform-origin:0 50%;">05s</span>
<div style="left:968px;top:722px;width:1px;height:5px;background:#8a8a8a;"></div>
<span class="j" style="left:960px;top:709.0px;line-height:13px;font-size:11px;color:#b8b8b8;transform:scaleX(0.958);transform-origin:0 50%;">10s</span>
<div style="left:1061px;top:722px;width:1px;height:5px;background:#8a8a8a;"></div>
<span class="j" style="left:1053px;top:709.0px;line-height:13px;font-size:11px;color:#b8b8b8;transform:scaleX(0.958);transform-origin:0 50%;">15s</span>
<div style="left:1154px;top:722px;width:1px;height:5px;background:#8a8a8a;"></div>
<span class="j" style="left:1146px;top:709.0px;line-height:13px;font-size:11px;color:#b8b8b8;transform:scaleX(0.958);transform-origin:0 50%;">20s</span>
<div style="left:1246px;top:722px;width:1px;height:5px;background:#8a8a8a;"></div>
<span class="j" style="left:1238px;top:709.0px;line-height:13px;font-size:11px;color:#b8b8b8;transform:scaleX(0.958);transform-origin:0 50%;">25s</span>
<div style="left:1339px;top:722px;width:1px;height:5px;background:#8a8a8a;"></div>
<span class="j" style="left:1331px;top:709.0px;line-height:13px;font-size:11px;color:#b8b8b8;transform:scaleX(0.958);transform-origin:0 50%;">30s</span>
<div style="left:1431px;top:722px;width:1px;height:5px;background:#8a8a8a;"></div>
<span class="j" style="left:1423px;top:709.0px;line-height:13px;font-size:11px;color:#b8b8b8;transform:scaleX(0.958);transform-origin:0 50%;">35s</span>
<div style="left:1524px;top:722px;width:1px;height:5px;background:#8a8a8a;"></div>
<span class="j" style="left:1516px;top:709.0px;line-height:13px;font-size:11px;color:#b8b8b8;transform:scaleX(0.958);transform-origin:0 50%;">40s</span>
<div style="left:1616px;top:722px;width:1px;height:5px;background:#8a8a8a;"></div>
<span class="j" style="left:1608px;top:709.0px;line-height:13px;font-size:11px;color:#b8b8b8;transform:scaleX(0.958);transform-origin:0 50%;">45s</span>
<div style="left:1709px;top:722px;width:1px;height:5px;background:#8a8a8a;"></div>
<span class="j" style="left:1701px;top:709.0px;line-height:13px;font-size:11px;color:#b8b8b8;transform:scaleX(0.958);transform-origin:0 50%;">50s</span>
<div style="left:1801px;top:722px;width:1px;height:5px;background:#8a8a8a;"></div>
<span class="j" style="left:1793px;top:709.0px;line-height:13px;font-size:11px;color:#b8b8b8;transform:scaleX(0.958);transform-origin:0 50%;">55s</span>
<div style="left:1879px;top:708px;width:21px;height:16px;overflow:hidden;">
<span class="j" style="left:0px;top:1.0px;line-height:13px;font-size:11px;color:#b8b8b8;transform:scaleX(0.872);transform-origin:0 50%;">01:00</span>
</div>
<div style="left:1894px;top:719px;width:1px;height:8px;background:#8a8a8a;"></div>
<div style="left:778px;top:727px;width:1122px;height:2px;background:#121212;"></div>
<div style="left:778px;top:729px;width:1122px;height:16px;background:#232323;"></div>
<div style="left:783px;top:729px;width:1112px;height:14px;background:#606060;"></div>
<div style="left:777px;top:729px;width:6px;height:14px;background:#2d8ceb;border-radius:5px 0 0 5px;"></div>
<div style="left:1895px;top:729px;width:5px;height:14px;background:#2d8ceb;border-radius:0 5px 5px 0;"></div>
<div style="left:778px;top:743px;width:1122px;height:4px;background:#232323;"></div>
<div style="left:778px;top:747px;width:1122px;height:1px;background:#0c0c0c;"></div>
<div style="left:778px;top:748px;width:1116px;height:265px;background:#323232;"></div>
<div style="left:777px;top:767px;width:6px;height:246px;background:#2c2c2c;"></div>
<div style="left:1894px;top:748px;width:6px;height:190px;background:#3f3f3f;"></div>
<div style="left:1894px;top:938px;width:6px;height:75px;background:#292929;"></div>
<div style="left:778px;top:748px;width:1122px;height:18px;background:#484848;"></div>
<div style="left:784px;top:749px;width:1110px;height:16px;background:#c25256;background-image:linear-gradient(#c6575b,#be4e52);"></div>
<div style="left:784px;top:749px;width:1110px;height:1px;background:#d9a0a2;"></div>
<svg style="left:784px;top:750px;" width="1110" height="15" viewBox="0 0 1110 15"><filter id="nz" x="0" y="0" width="100%" height="100%"><feTurbulence type="fractalNoise" baseFrequency="0.850" numOctaves="2" seed="7"/><feColorMatrix values="0 0 0 0 0  0 0 0 0 0  0 0 0 0 0  0.220 0.220 0.220 0 -0.250"/></filter><rect width="1110" height="15" filter="url(#nz)"/></svg>
<div style="left:778px;top:785px;width:1122px;height:1px;background:#262626;"></div>
<div style="left:778px;top:804px;width:1122px;height:1px;background:#262626;"></div>
<div style="left:778px;top:823px;width:1122px;height:1px;background:#262626;"></div>
<div style="left:778px;top:842px;width:1122px;height:1px;background:#262626;"></div>
<div style="left:778px;top:861px;width:1122px;height:1px;background:#262626;"></div>
<div style="left:778px;top:880px;width:1122px;height:1px;background:#262626;"></div>
<div style="left:778px;top:899px;width:1122px;height:1px;background:#262626;"></div>
<div style="left:778px;top:918px;width:1122px;height:1px;background:#262626;"></div>
<div style="left:778px;top:919px;width:1122px;height:18px;background:#3c3c3c;"></div>
<div style="left:784px;top:920px;width:1074px;height:16px;background:#7b877d;border-radius:4px 0 0 0;"></div>
<svg style="left:1850px;top:920px;" width="8" height="6" viewBox="0 0 8 6"><path d="M2 0.500h5.500v5z" fill="#4a564c"/></svg>
<div style="left:778px;top:938px;width:1116px;height:1px;background:#262626;"></div>
<div style="left:783px;top:714px;width:1px;height:299px;background:#2d8ceb;"></div>
<svg style="left:777px;top:713px;" width="13" height="14" viewBox="0 0 13 14"><path d="M0.500 0.500h12v5L6.500 13 0.500 5.500z" fill="#2d8ceb"/><path d="M6.500 5v8" stroke="#7ab8f5" stroke-width="1"/></svg>
<svg style="left:779px;top:770px;" width="8" height="12" viewBox="0 0 8 12"><path d="M0.500 0.800h7M0.500 11.200h7" stroke="#d0d0d0" stroke-width="1.400"/><path d="M4 0.500v11" stroke="#d0d0d0" stroke-width="1.800"/></svg>
<svg style="left:779px;top:789px;" width="8" height="12" viewBox="0 0 8 12"><path d="M0.500 0.800h7M0.500 11.200h7" stroke="#d0d0d0" stroke-width="1.400"/><path d="M4 0.500v11" stroke="#d0d0d0" stroke-width="1.800"/></svg>
<svg style="left:779px;top:808px;" width="8" height="12" viewBox="0 0 8 12"><path d="M0.500 0.800h7M0.500 11.200h7" stroke="#d0d0d0" stroke-width="1.400"/><path d="M4 0.500v11" stroke="#d0d0d0" stroke-width="1.800"/></svg>
<svg style="left:779px;top:827px;" width="8" height="12" viewBox="0 0 8 12"><path d="M0.500 0.800h7M0.500 11.200h7" stroke="#d0d0d0" stroke-width="1.400"/><path d="M4 0.500v11" stroke="#d0d0d0" stroke-width="1.800"/></svg>
<svg style="left:779px;top:846px;" width="8" height="12" viewBox="0 0 8 12"><path d="M0.500 0.800h7M0.500 11.200h7" stroke="#d0d0d0" stroke-width="1.400"/><path d="M4 0.500v11" stroke="#d0d0d0" stroke-width="1.800"/></svg>
<svg style="left:779px;top:865px;" width="8" height="12" viewBox="0 0 8 12"><path d="M0.500 0.800h7M0.500 11.200h7" stroke="#d0d0d0" stroke-width="1.400"/><path d="M4 0.500v11" stroke="#d0d0d0" stroke-width="1.800"/></svg>
<svg style="left:779px;top:884px;" width="8" height="12" viewBox="0 0 8 12"><path d="M0.500 0.800h7M0.500 11.200h7" stroke="#d0d0d0" stroke-width="1.400"/><path d="M4 0.500v11" stroke="#d0d0d0" stroke-width="1.800"/></svg>
<svg style="left:779px;top:903px;" width="8" height="12" viewBox="0 0 8 12"><path d="M0.500 0.800h7M0.500 11.200h7" stroke="#d0d0d0" stroke-width="1.400"/><path d="M4 0.500v11" stroke="#d0d0d0" stroke-width="1.800"/></svg>
<div style="left:1900px;top:692px;width:20px;height:321px;background:#232323;"></div>
<svg style="left:1903px;top:730px;" width="16" height="15" viewBox="0 0 16 15"><path d="M1.500 0.500h13v8L8 14 1.500 8.500z" fill="#b4b4b4"/></svg>
<div style="left:1900px;top:747px;width:18px;height:1px;background:#141414;"></div>
<svg style="left:1901px;top:750px;" width="18" height="14" viewBox="0 0 18 14"><path d="M9 2h8v8H9z" fill="#b4b4b4"/><path d="M1 9l8-7v10z" fill="none" stroke="#c8c8c8" stroke-width="1.200"/><circle cx="7.500" cy="9.500" r="3" fill="#232323" stroke="#c8c8c8" stroke-width="1.200"/></svg>
<div style="left:0px;top:70px;width:1px;height:963px;background:#171717;"></div>
<div style="left:0px;top:1013px;width:883px;height:1px;background:#0a0a0a;"></div>
<div style="left:0px;top:1014px;width:1920px;height:19px;background:#232323;"></div>
<div style="left:6px;top:1014px;width:17px;height:17px;background:#1b1b1b;border:1px solid #2e2e2e;box-sizing:border-box;"></div>
<div style="left:25px;top:1014px;width:17px;height:17px;background:#1b1b1b;border:1px solid #2e2e2e;box-sizing:border-box;"></div>
<svg style="left:8px;top:1016px;" width="13" height="13" viewBox="0 0 13 13"><rect x="0.700" y="0.700" width="7.500" height="7.500" fill="#1b1b1b" stroke="#2d8ceb" stroke-width="1.300"/><rect x="4.300" y="4.300" width="8" height="8" fill="#1b1b1b" stroke="#2d8ceb" stroke-width="1.300"/><rect x="7" y="7" width="2.600" height="2.600" fill="#2d8ceb"/></svg>
<svg style="left:27px;top:1015px;" width="14" height="14" viewBox="0 0 14 14"><circle cx="5.300" cy="5.300" r="4.300" fill="none" stroke="#2d8ceb" stroke-width="1.300"/><rect x="5.500" y="5.500" width="7.500" height="7.500" fill="none" stroke="#2d8ceb" stroke-width="1.300"/><rect x="5.500" y="5.500" width="3" height="3" fill="#2d8ceb"/></svg>
<svg style="left:46px;top:1016px;" width="13" height="13" viewBox="0 0 13 13"><path d="M4.500 0.500h4v1c0 2 .800 2.500.800 5s-.800 3-.800 5v1h-4v-1c0-2-.800-2.500-.800-5s.800-3 .800-5z" fill="#8a8a8a"/><path d="M3 3.500L0.500 6.500 3 9.500M10 3.500l2.500 3-2.500 3" fill="#8a8a8a"/></svg>
<svg style="left:65px;top:1016px;" width="14" height="13" viewBox="0 0 14 13"><circle cx="5" cy="5" r="4" fill="#8a8a8a"/><path d="M0.500 12h10v-1.500h-10z" fill="#8a8a8a"/><path d="M9.500 2v6M9.500 2.500l3.500 1-3.500 2" fill="#8a8a8a" stroke="#8a8a8a" stroke-width="1"/></svg>
<span class="j" style="left:106px;top:1014.5px;line-height:16px;font-size:12px;color:#c8c8c8;transform:scaleX(0.799);transform-origin:0 50%;">フレームレンダリング時間</span>
<span class="j" style="left:229px;top:1015.5px;line-height:14px;font-size:11px;color:#35c8b0;transform:scaleX(0.914);transform-origin:0 50%;">3ms</span>
<svg style="left:781px;top:1018px;" width="10" height="6" viewBox="0 0 10 6"><path d="M0.300 5.500L3 3l1 .800L6 0.800l3.700 4.700z" fill="#c0c0c0"/></svg>
<svg style="left:802px;top:1017px;" width="11" height="11" viewBox="0 0 11 11"><circle cx="5.500" cy="5.500" r="3.600" fill="none" stroke="#c0c0c0" stroke-width="1.700"/></svg>
<div style="left:812px;top:1021px;width:38px;height:2px;background:#3c3c3c;"></div>
<svg style="left:861px;top:1018px;" width="18" height="8" viewBox="0 0 18 8"><path d="M0.300 7.500L4.500 2h1.800L2.800 7.500zM5 7.500L10.500 0.500 16.500 7.500z" fill="#c0c0c0"/></svg>
<div style="left:0px;top:1032px;width:1920px;height:1px;background:#1a1a1a;"></div>
<div style="left:573px;top:1032px;width:269px;height:1px;background:#e6e6e6;"></div>
<div style="left:842px;top:1032px;width:1078px;height:1px;background:#1b2430;"></div>
</div>
</body></html>
